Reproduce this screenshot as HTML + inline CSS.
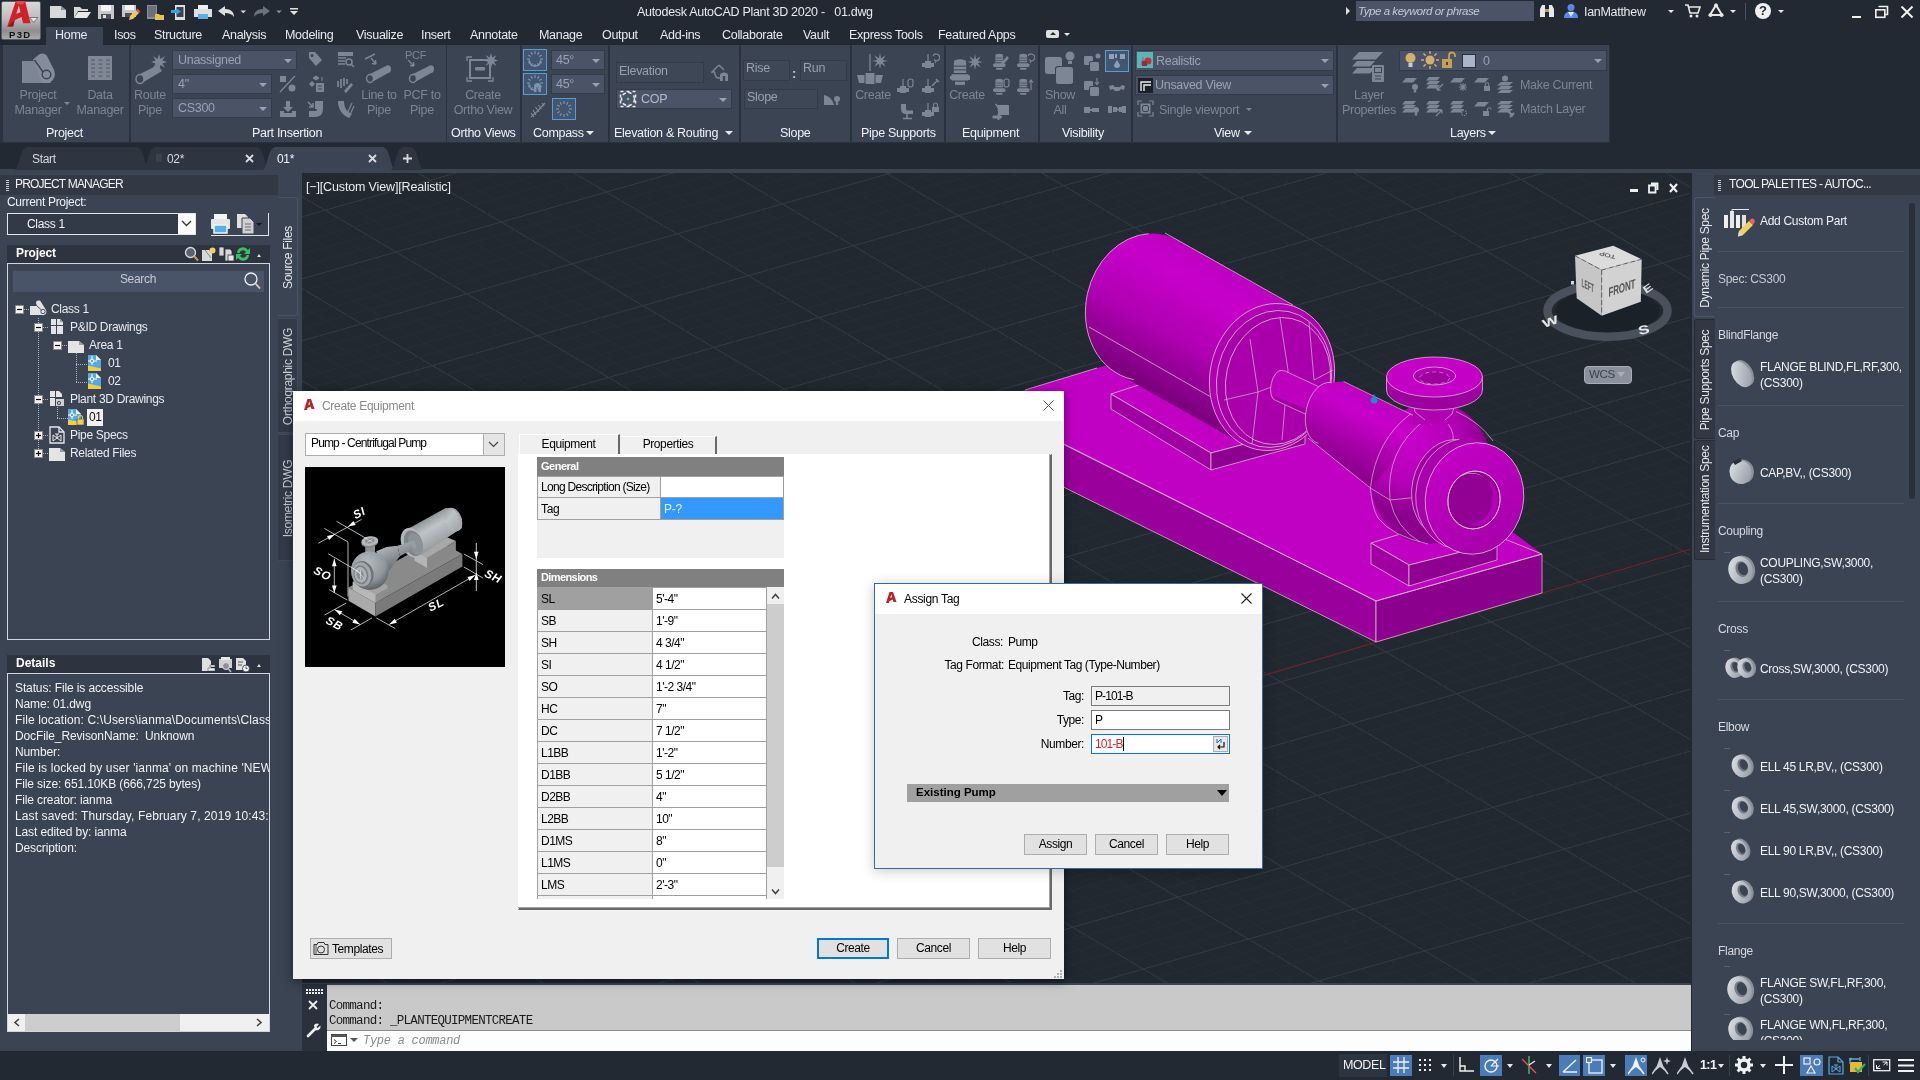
<!DOCTYPE html>
<html lang="en">
<head>
<meta charset="utf-8">
<title>Autodesk AutoCAD Plant 3D 2020 - 01.dwg</title>
<style>
*{box-sizing:border-box;margin:0;padding:0}
html,body{width:1920px;height:1080px;overflow:hidden;background:#222933;will-change:transform;font-family:"Liberation Sans",sans-serif;font-size:12px;color:#e4e7ec;letter-spacing:-0.3px}
.abs{position:absolute}
div,span,svg{position:absolute}
.t{white-space:nowrap;line-height:1}
/* ===== title bar ===== */
#titlebar{left:0;top:0;width:1920px;height:46px;background:#222933}
#menubar .t{font-size:12.5px;color:#e6e9ee;top:29px}
/* ===== ribbon ===== */
#ribbon{left:0;top:45px;width:1920px;height:98px;background:#222933}
.panel{top:0;height:97px;background:#3b4453}
.ptitle{font-size:12.5px;color:#f0f2f5;top:82px}
.dim{color:#7c8594}
.combo{background:#4a5466;border:1px solid #333b48;height:20px}
.combo .t{font-size:12.5px;color:#9aa2b0;top:3px;left:5px}
.arr{width:0;height:0;border-left:4px solid transparent;border-right:4px solid transparent;border-top:4px solid #9aa2b0}
.arrw{width:0;height:0;border-left:4px solid transparent;border-right:4px solid transparent;border-top:4px solid #e6e9ee}
/* ===== file tabs ===== */
#filetabs{left:0;top:143px;width:1920px;height:29px;background:#222933}
/* ===== palettes ===== */
#pm{left:0;top:172px;width:278px;height:879px;background:#3b4453}
#tp{left:1692px;top:172px;width:228px;height:879px;background:#3b4453;overflow:hidden}
#viewport{left:302px;top:173px;width:1388px;height:810px;background:#212830;overflow:hidden}
#cmd{left:300px;top:984px;width:1391px;height:67px;background:#2d3440}
#status{left:0;top:1051px;width:1920px;height:29px;background:#222933}
/* ===== dialogs ===== */
.dlg{background:#f0f0f0;color:#000}
.dlg .t{color:#000;font-size:12px}
.btn{border:1px solid #adadad;background:#e1e1e1;height:22px}

</style>
</head>
<body>
<div id="titlebar">
<div style="left:1px;top:1px;width:40px;height:39px;background:linear-gradient(#d8d8d8,#bcbcbc 45%,#8e8e8e 78%,#aaaaaa);border:1px solid #5a5f66;border-radius:2px"></div>
<svg style="left:2px;top:-2px" width="38" height="38" viewBox="0 0 36 36">
<path d="M5 27 L13 3 L22 3 L27 24 L20 24 L18.5 18 L12 21 L10.5 27 Z M13.5 15 L17.5 13.5 L16 7 Z" fill="#d0202a" fill-rule="evenodd"/>
<path d="M13 3 L22 3 L20 6 L15 6 Z" fill="#e8484e"/>
<path d="M5 27 L12 21 L10.5 27 Z" fill="#9c1018"/>
<path d="M26 18.5 L34 18.5 L30 23 Z" fill="#e8e8e8" stroke="#444" stroke-width="0.6"/>
</svg>
<span class="t" style="left:9px;top:30px;font-size:9.5px;font-weight:bold;color:#111;letter-spacing:1.3px">P3D</span>
<!-- QAT icons -->
<svg style="left:48px;top:2px" width="260" height="20" viewBox="0 0 260 20">
<path d="M2 4 H13 L18 8 V16 H2 Z" fill="#d8d8d8"/><path d="M13 4 L18 8 H13 Z" fill="#8a8a8a"/>
<path d="M26 5 H32 L34 7 H40 V9 H30 L26 16 Z" fill="#d8d8d8"/><path d="M30 10 H43 L39 16 H26 Z" fill="#e8e8e8"/>
<path d="M50 3 H66 V17 H50 Z" fill="#c8c8c8"/><path d="M53 3 H63 V9 H53 Z" fill="#f4f4f4"/><path d="M53 12 H63 V17 H53 Z" fill="#4a4f58"/><path d="M55 13 H58 V16 H55 Z" fill="#e0e0e0"/>
<path d="M74 3 H88 V15 H74 Z" fill="#c8c8c8"/><path d="M77 3 H86 V8 H77 Z" fill="#f4f4f4"/><path d="M77 11 H84 V15 H77 Z" fill="#4a4f58"/><path d="M82 14 L88 8 L91 11 L85 17 L81 18 Z" fill="#e8c66a"/><path d="M88 8 L89.5 6.5 L92.5 9.5 L91 11 Z" fill="#d85050"/>
<path d="M99 3 H109 V17 H99 Z" fill="#8a8f98"/><path d="M100 4 H108 V15 H100 Z" fill="#6a6f78"/><path d="M107 12 H111 L112 13 H116 V18 H107 Z" fill="#e8c050"/>
<path d="M127 3 H137 V18 H127 Z" fill="#e0e0e0"/><path d="M128.500 5 H135.500 V15 H128.500 Z" fill="#3a4250"/><path d="M123 8 H128 V6 L133 9.500 L128 13 V11 H123 Z" fill="#38a0e0"/>
<path d="M150 3 H160 V8 H150 Z" fill="#f0f0f0"/><path d="M146 7 H164 V15 H146 Z" fill="#e0e0e0"/><path d="M150 12 H160 V17 H150 Z" fill="#58b0e8"/>
<path d="M170 9 L177 4 V7 C183 7 186 10 186 15 C184 12 181 11 177 11 V14 Z" fill="#e0e0e0"/>
<path d="M191 8 H199 L195 12 Z" fill="#d8d8d8" transform="scale(0.7) translate(84 4)"/>
<path d="M222 9 L215 4 V7 C209 7 206 10 206 15 C208 12 211 11 215 11 V14 Z" fill="#6a727e"/>
<path d="M227 8 H235 L231 12 Z" fill="#8a919c" transform="scale(0.7) translate(99 4)"/>
<path d="M242 6 H250 V7.500 H242 Z M242 9 H250 L246 13 Z" fill="#e0e0e0"/>
</svg>
<span class="t" style="left:637px;top:5.5px;font-size:12.5px;color:#e6e9ee">Autodesk AutoCAD Plant 3D 2020 -&nbsp;&nbsp; 01.dwg</span>
<div style="left:1346px;top:7px;width:0;height:0;border-top:4px solid transparent;border-bottom:4px solid transparent;border-left:4px solid #e0e0e0"></div>
<div style="left:1356px;top:1px;width:178px;height:20px;background:#4a5466"></div>
<span class="t" style="left:1358px;top:6px;font-size:11.5px;font-style:italic;color:#c4cad4;letter-spacing:-0.45px">Type a keyword or phrase</span>
<svg style="left:1538px;top:3px" width="18" height="16" viewBox="0 0 18 16"><path d="M2 6 L4 2 H7 V6 H11 V2 H14 L16 6 V14 H11 V9 H7 V14 H2 Z" fill="#e8e8e8"/><path d="M7 6 H11 V9 H7 Z" fill="#b8a070"/></svg>
<svg style="left:1563px;top:2px" width="16" height="18" viewBox="0 0 16 18"><circle cx="8" cy="5.500" r="3.500" fill="#5a88e8"/><path d="M1 16 C1 11 4 9.500 8 9.500 C12 9.500 15 11 15 16 Z" fill="#5a88e8"/><path d="M5 10 L8 15 L11 10 Z" fill="#dfe6f8"/></svg>
<span class="t" style="left:1584px;top:6px;font-size:12.5px;color:#e6e9ee">IanMatthew</span>
<div class="arrw" style="left:1668px;top:10px;border-width:3px 3px 0 3px"></div>
<svg style="left:1684px;top:3px" width="18" height="16" viewBox="0 0 18 16"><path d="M1 2 H4 L6 10 H14 L16 4 H5" fill="none" stroke="#e8e8e8" stroke-width="1.600"/><circle cx="7" cy="13" r="1.500" fill="#e8e8e8"/><circle cx="13" cy="13" r="1.500" fill="#e8e8e8"/></svg>
<svg style="left:1707px;top:2px" width="18" height="18" viewBox="0 0 18 18"><path d="M9 3 L15 13 H3 Z" fill="none" stroke="#e8e8e8" stroke-width="2"/><circle cx="9" cy="3.500" r="2" fill="#e8e8e8"/><circle cx="3.500" cy="13" r="2" fill="#e8e8e8"/><circle cx="14.500" cy="13" r="2" fill="#e8e8e8"/></svg>
<div class="arrw" style="left:1730px;top:10px;border-width:3px 3px 0 3px"></div>
<div style="left:1745px;top:3px;width:1px;height:17px;background:#4a5261"></div>
<div style="left:1755px;top:3px;width:16px;height:16px;border-radius:8px;background:#f0f0f0"></div>
<span class="t" style="left:1759px;top:4px;font-size:13px;font-weight:bold;color:#222933">?</span>
<div class="arrw" style="left:1778px;top:10px;border-width:3px 3px 0 3px"></div>
<div style="left:1852px;top:16px;width:9px;height:2px;background:#f0f0f0"></div>
<svg style="left:1874px;top:5px" width="16" height="14" viewBox="0 0 16 14"><path d="M4.500 1.500 H13.500 V9.500 H11" fill="none" stroke="#f0f0f0" stroke-width="1.600"/><rect x="1.800" y="4.800" width="9" height="7.500" fill="none" stroke="#f0f0f0" stroke-width="1.600"/></svg>
<svg style="left:1900px;top:5px" width="14" height="14" viewBox="0 0 14 14"><path d="M1.500 1.500 L12.500 12.500 M12.500 1.500 L1.500 12.500" stroke="#f0f0f0" stroke-width="2"/></svg>
</div>
<div id="menubar">
<div style="left:46px;top:27px;width:57px;height:19px;background:#3b4453"></div>
<span class="t" style="left:55px">Home</span>
<span class="t" style="left:114px">Isos</span>
<span class="t" style="left:154px">Structure</span>
<span class="t" style="left:222px">Analysis</span>
<span class="t" style="left:285px">Modeling</span>
<span class="t" style="left:356px">Visualize</span>
<span class="t" style="left:421px">Insert</span>
<span class="t" style="left:470px">Annotate</span>
<span class="t" style="left:539px">Manage</span>
<span class="t" style="left:602px">Output</span>
<span class="t" style="left:660px">Add-ins</span>
<span class="t" style="left:722px">Collaborate</span>
<span class="t" style="left:803px">Vault</span>
<span class="t" style="left:849px">Express Tools</span>
<span class="t" style="left:938px">Featured Apps</span>
<div style="left:1046px;top:30px;width:13px;height:8px;border-radius:2px;background:#e0e0e0"></div><div style="left:1050px;top:32px;width:0;height:0;border-left:3px solid transparent;border-right:3px solid transparent;border-bottom:3px solid #222933"></div><div class="arrw" style="left:1064px;top:33px;border-width:3px 3px 0 3px"></div>
</div>
<!--RIB--><div id="ribbon">
<div style="left:0;top:0;width:1610px;height:98px;background:#2b323e"></div>
<div class="panel" style="left:3px;width:126px"></div><span class="t ptitle" style="left:46px">Project</span>
<div class="panel" style="left:131px;width:315px"></div><span class="t ptitle" style="left:252px">Part Insertion</span>
<div class="panel" style="left:447px;width:73px"></div><span class="t ptitle" style="left:451px">Ortho Views</span>
<div class="panel" style="left:522px;width:86px"></div><span class="t ptitle" style="left:533px">Compass</span>
<div class="arrw" style="left:586px;top:86px"></div>
<div class="panel" style="left:610px;width:129px"></div><span class="t ptitle" style="left:614px">Elevation &amp; Routing</span>
<div class="arrw" style="left:725px;top:86px"></div>
<div class="panel" style="left:741px;width:109px"></div><span class="t ptitle" style="left:780px">Slope</span>
<div class="panel" style="left:852px;width:92px"></div><span class="t ptitle" style="left:861px">Pipe Supports</span>
<div class="panel" style="left:946px;width:92px"></div><span class="t ptitle" style="left:962px">Equipment</span>
<div class="panel" style="left:1040px;width:91px"></div><span class="t ptitle" style="left:1062px">Visibility</span>
<div class="panel" style="left:1133px;width:203px"></div><span class="t ptitle" style="left:1214px">View</span>
<div class="arrw" style="left:1244px;top:86px"></div>
<div class="panel" style="left:1338px;width:271px"></div><span class="t ptitle" style="left:1450px">Layers</span>
<div class="arrw" style="left:1488px;top:86px"></div>
<svg style="left:21px;top:8px" width="35" height="31" viewBox="0 0 35 31"><path d="M1 8 H14 L30 30 H1 Z" fill="#7d8695"/><path d="M12 6.500 L18 1.500 C21 -0.500 24.500 0.500 26 3 L33 17 C35.500 23 32 30 25 30 L21 29 Z" fill="#858d9b"/><circle cx="25.500" cy="21.500" r="4.300" fill="none" stroke="#3b4453" stroke-width="1.400"/><path d="M13.500 7 L22 19" stroke="#3b4453" stroke-width="1.400"/></svg>
<span class="t dim" style="left:-12px;width:100px;text-align:center;top:44px;font-size:12.5px">Project</span>
<span class="t dim" style="left:-12px;width:100px;text-align:center;top:59px;font-size:12.5px">Manager</span>
<div class="arr" style="left:64px;top:57px;border-width:3px 3px 0 3px;border-top-color:#7d8695"></div>
<svg style="left:88px;top:11px" width="24" height="25" viewBox="0 0 24 25"><rect width="24" height="24" fill="#808896"/><rect x="3.0" y="3.5" width="4" height="1.200" fill="#596170"/><rect x="10.5" y="3.5" width="4" height="1.200" fill="#596170"/><rect x="18.0" y="3.5" width="4" height="1.200" fill="#596170"/><rect x="3.0" y="7.5" width="4" height="1.200" fill="#596170"/><rect x="10.5" y="7.5" width="4" height="1.200" fill="#596170"/><rect x="18.0" y="7.5" width="4" height="1.200" fill="#596170"/><rect x="3.0" y="11.5" width="4" height="1.200" fill="#596170"/><rect x="10.5" y="11.5" width="4" height="1.200" fill="#596170"/><rect x="18.0" y="11.5" width="4" height="1.200" fill="#596170"/><rect x="3.0" y="15.5" width="4" height="1.200" fill="#596170"/><rect x="10.5" y="15.5" width="4" height="1.200" fill="#596170"/><rect x="18.0" y="15.5" width="4" height="1.200" fill="#596170"/><rect x="3.0" y="19.5" width="4" height="1.200" fill="#596170"/><rect x="10.5" y="19.5" width="4" height="1.200" fill="#596170"/><rect x="18.0" y="19.5" width="4" height="1.200" fill="#596170"/></svg>
<span class="t dim" style="left:50px;width:100px;text-align:center;top:44px;font-size:12.5px">Data</span>
<span class="t dim" style="left:50px;width:100px;text-align:center;top:59px;font-size:12.5px">Manager</span>
<svg style="left:134px;top:8px" width="36" height="32" viewBox="0 0 36 32"><path d="M4 22 L24 12 L28 18 L8 30 Z" fill="#7d8695"/><ellipse cx="6" cy="26" rx="4" ry="4.500" fill="#3b4453" stroke="#7d8695" stroke-width="1.500"/><path d="M25 1 L26.500 6 L31 3 L28.500 7.500 L33 9 L28.500 10.500 L31 15 L26.500 12 L25 17 L23.500 12 L19 15 L21.500 10.500 L17 9 L21.500 7.500 L19 3 L23.500 6 Z" fill="#7d8695"/></svg>
<span class="t dim" style="left:100px;width:100px;text-align:center;top:44px;font-size:12.5px">Route</span>
<span class="t dim" style="left:100px;width:100px;text-align:center;top:59px;font-size:12.5px">Pipe</span>
<div class="combo" style="left:172px;top:5px;width:125px;height:20px"><span class="t" style="left:5px;top:3px;font-size:12.5px">Unassigned</span><div class="arr" style="left:111px;top:8px"></div></div>
<div class="combo" style="left:172px;top:29px;width:100px;height:20px"><span class="t" style="left:5px;top:3px;font-size:12.5px">4&quot;</span><div class="arr" style="left:86px;top:8px"></div></div>
<div class="combo" style="left:172px;top:53px;width:100px;height:20px"><span class="t" style="left:5px;top:3px;font-size:12.5px">CS300</span><div class="arr" style="left:86px;top:8px"></div></div>
<svg style="left:306px;top:5px" width="18" height="18" viewBox="0 0 18 18"><path d="M3 2 L9 2 L16 10 L10 16 L3 8 Z" fill="#7d8695"/><circle cx="6" cy="5.500" r="1.500" fill="#3b4453"/></svg>
<svg style="left:336px;top:5px" width="20" height="20" viewBox="0 0 20 20"><rect x="2" y="2" width="15" height="4" fill="#7d8695"/><path d="M2 8 H10 M2 11 H9 M2 14 H9" stroke="#7d8695" stroke-width="1.500"/><circle cx="13" cy="12" r="3" fill="none" stroke="#7d8695" stroke-width="1.500"/><path d="M15 14 L18 17" stroke="#7d8695" stroke-width="1.500"/></svg>
<svg style="left:279px;top:30px" width="18" height="18" viewBox="0 0 18 18"><rect x="1" y="1" width="6" height="6" fill="#7d8695"/><circle cx="13" cy="13" r="3.500" fill="#7d8695"/><path d="M1 17 L16 1" stroke="#7d8695" stroke-width="1.300"/></svg>
<svg style="left:307px;top:30px" width="18" height="18" viewBox="0 0 18 18"><path d="M5 6 L8 9 L5 12 L2 9 Z" fill="#7d8695"/><rect x="9" y="8" width="8" height="9" fill="#7d8695"/><path d="M6 3 L9 1 V5 Z M12 3 L9 1 V5 Z M15 2 V6" fill="#7d8695" stroke="#7d8695"/><path d="M11 11 H15 M11 14 H15" stroke="#3b4453"/></svg>
<svg style="left:336px;top:30px" width="18" height="19" viewBox="0 0 18 19"><path d="M2 6 V12 M5 4 V13 M8 3 V11 M11 4 V9" stroke="#7d8695" stroke-width="1.700"/><path d="M8 16 L15 8 L17 10 L10 18 Z" fill="#7d8695"/></svg>
<svg style="left:279px;top:55px" width="18" height="18" viewBox="0 0 18 18"><path d="M7 1 H11 V7 H14 L9 12 L4 7 H7 Z" fill="#7d8695"/><path d="M1 11 H5 V13 H13 V11 H17 V17 H1 Z" fill="#7d8695"/></svg>
<svg style="left:307px;top:55px" width="18" height="18" viewBox="0 0 18 18"><path d="M8 1 H16 V9 C16 14 13 17 8 17 H2 V11 H8 C9.500 11 10 10.500 10 9 H8 Z" fill="#7d8695"/><path d="M1 2 L6 7 M6 3 V7 H2" stroke="#7d8695" stroke-width="1.500" fill="none"/></svg>
<svg style="left:336px;top:55px" width="19" height="19" viewBox="0 0 19 19"><path d="M2 1 H8 C8 8 11 12 16 14 L13 18 C6 15 2 9 2 1 Z" fill="#7d8695"/><path d="M10 16 L16 3 M13 17 L18 6" stroke="#7d8695" stroke-width="1.200"/></svg>
<svg style="left:362px;top:8px" width="32" height="32" viewBox="0 0 32 32"><path d="M3 6 L13 1" stroke="#7d8695" stroke-width="1.500"/><path d="M9 5 L14 11 M14 11 L13.500 7 M14 11 L10 10.500" stroke="#7d8695" stroke-width="1.300" fill="none"/><path d="M6 22 L24 13 L28 19 L10 29 Z" fill="#7d8695"/><ellipse cx="8" cy="25.500" rx="3.500" ry="4" fill="#3b4453" stroke="#7d8695" stroke-width="1.500"/><ellipse cx="26" cy="16" rx="3" ry="3.700" fill="#7d8695"/></svg>
<span class="t dim" style="left:329px;width:100px;text-align:center;top:44px;font-size:12.5px">Line to</span>
<span class="t dim" style="left:329px;width:100px;text-align:center;top:59px;font-size:12.5px">Pipe</span>
<span class="t dim" style="left:405px;top:5px;font-size:11px;">PCF</span>
<svg style="left:405px;top:14px" width="32" height="26" viewBox="0 0 32 26"><path d="M3 1 L9 7 M9 7 L8.500 3 M9 7 L5 6.500" stroke="#7d8695" stroke-width="1.300" fill="none"/><path d="M6 16 L24 7 L28 13 L10 23 Z" fill="#7d8695"/><ellipse cx="8" cy="19.500" rx="3.500" ry="4" fill="#3b4453" stroke="#7d8695" stroke-width="1.500"/><ellipse cx="26" cy="10" rx="3" ry="3.700" fill="#7d8695"/></svg>
<span class="t dim" style="left:372px;width:100px;text-align:center;top:44px;font-size:12.5px">PCF to</span>
<span class="t dim" style="left:372px;width:100px;text-align:center;top:59px;font-size:12.5px">Pipe</span>
<svg style="left:466px;top:8px" width="33" height="30" viewBox="0 0 33 30"><path d="M1 8 V4 H6 M1 24 V28 H6 M22 28 H27 V24" fill="none" stroke="#7d8695" stroke-width="1.300"/><rect x="4" y="7" width="20" height="18" fill="none" stroke="#7d8695" stroke-width="2"/><rect x="9" y="14" width="10" height="3.500" rx="1" fill="#7d8695"/><path d="M25 0 L26.300 4.500 L30.500 2 L28 6 L32 7.500 L28 9 L30.500 13 L26.300 10.500 L25 15 L23.700 10.500 L19.500 13 L22 9 L18 7.500 L22 6 L19.500 2 L23.700 4.500 Z" fill="#7d8695"/></svg>
<span class="t dim" style="left:433px;width:100px;text-align:center;top:44px;font-size:12.5px">Create</span>
<span class="t dim" style="left:433px;width:100px;text-align:center;top:59px;font-size:12.5px">Ortho View</span>
<div style="left:523px;top:4px;width:24px;height:22px;background:#43566f;border:1px solid #5b9bd5"></div>
<div style="left:523px;top:28px;width:24px;height:22px;background:#43566f;border:1px solid #5b9bd5"></div>
<div style="left:552px;top:53px;width:24px;height:22px;background:#43566f;border:1px solid #5b9bd5"></div>
<svg style="left:526px;top:6px" width="18" height="18" viewBox="0 0 18 18"><path d="M14.0 8.0 L17.0 8.0" stroke="#7a93b5" stroke-width="1.200"/><path d="M13.3 10.5 L15.9 12.0" stroke="#7a93b5" stroke-width="1.200"/><path d="M11.5 12.3 L13.0 14.9" stroke="#7a93b5" stroke-width="1.200"/><path d="M9.0 13.0 L9.0 16.0" stroke="#7a93b5" stroke-width="1.200"/><path d="M6.5 12.3 L5.0 14.9" stroke="#7a93b5" stroke-width="1.200"/><path d="M4.7 10.5 L2.1 12.0" stroke="#7a93b5" stroke-width="1.200"/><path d="M4.0 8.0 L1.0 8.0" stroke="#7a93b5" stroke-width="1.200"/><path d="M4.7 5.5 L2.1 4.0" stroke="#7a93b5" stroke-width="1.200"/><path d="M6.5 3.7 L5.0 1.1" stroke="#7a93b5" stroke-width="1.200"/><path d="M9.0 3.0 L9.0 0.0" stroke="#7a93b5" stroke-width="1.200"/><path d="M11.5 3.7 L13.0 1.1" stroke="#7a93b5" stroke-width="1.200"/><path d="M13.3 5.5 L15.9 4.0" stroke="#7a93b5" stroke-width="1.200"/><path d="M3 9 A6 6 0 0 0 15 9" fill="none" stroke="#7a93b5" stroke-width="1.300"/></svg>
<svg style="left:526px;top:30px" width="18" height="18" viewBox="0 0 18 18"><path d="M14.0 8.0 L17.0 8.0" stroke="#7a93b5" stroke-width="1.200"/><path d="M13.3 10.5 L15.9 12.0" stroke="#7a93b5" stroke-width="1.200"/><path d="M11.5 12.3 L13.0 14.9" stroke="#7a93b5" stroke-width="1.200"/><path d="M9.0 13.0 L9.0 16.0" stroke="#7a93b5" stroke-width="1.200"/><path d="M6.5 12.3 L5.0 14.9" stroke="#7a93b5" stroke-width="1.200"/><path d="M4.7 10.5 L2.1 12.0" stroke="#7a93b5" stroke-width="1.200"/><path d="M4.0 8.0 L1.0 8.0" stroke="#7a93b5" stroke-width="1.200"/><path d="M4.7 5.5 L2.1 4.0" stroke="#7a93b5" stroke-width="1.200"/><path d="M6.5 3.7 L5.0 1.1" stroke="#7a93b5" stroke-width="1.200"/><path d="M9.0 3.0 L9.0 0.0" stroke="#7a93b5" stroke-width="1.200"/><path d="M11.5 3.7 L13.0 1.1" stroke="#7a93b5" stroke-width="1.200"/><path d="M13.3 5.5 L15.9 4.0" stroke="#7a93b5" stroke-width="1.200"/><path d="M3 9 A6 6 0 0 0 8 15" fill="none" stroke="#7a93b5" stroke-width="1.300"/><path d="M8 17 V11 C8 7 15 7 15 11 V17 H12.500 V12 H10.500 V17 Z" fill="#7a93b5"/></svg>
<svg style="left:555px;top:55px" width="18" height="18" viewBox="0 0 18 18"><path d="M14.0 9.0 L17.0 9.0" stroke="#7a93b5" stroke-width="1.200"/><path d="M13.3 11.5 L15.9 13.0" stroke="#7a93b5" stroke-width="1.200"/><path d="M11.5 13.3 L13.0 15.9" stroke="#7a93b5" stroke-width="1.200"/><path d="M9.0 14.0 L9.0 17.0" stroke="#7a93b5" stroke-width="1.200"/><path d="M6.5 13.3 L5.0 15.9" stroke="#7a93b5" stroke-width="1.200"/><path d="M4.7 11.5 L2.1 13.0" stroke="#7a93b5" stroke-width="1.200"/><path d="M4.0 9.0 L1.0 9.0" stroke="#7a93b5" stroke-width="1.200"/><path d="M4.7 6.5 L2.1 5.0" stroke="#7a93b5" stroke-width="1.200"/><path d="M6.5 4.7 L5.0 2.1" stroke="#7a93b5" stroke-width="1.200"/><path d="M9.0 4.0 L9.0 1.0" stroke="#7a93b5" stroke-width="1.200"/><path d="M11.5 4.7 L13.0 2.1" stroke="#7a93b5" stroke-width="1.200"/><path d="M13.3 6.5 L15.9 5.0" stroke="#7a93b5" stroke-width="1.200"/></svg>
<svg style="left:529px;top:56px" width="18" height="18" viewBox="0 0 18 18"><path d="M2 16 C7 12 11 8 16 2 M4 9 L7 14 M6.500 6 L10 11 M9.500 4 L12.500 8 M13 2 L15 5 M2 12 L5 16" stroke="#7d8695" stroke-width="1.200" fill="none"/></svg>
<div class="combo" style="left:551px;top:5px;width:54px;height:20px"><span class="t" style="left:4px;top:3px;font-size:12.5px">45°</span><div class="arr" style="left:40px;top:8px"></div></div>
<div class="combo" style="left:551px;top:29px;width:54px;height:20px"><span class="t" style="left:4px;top:3px;font-size:12.5px">45°</span><div class="arr" style="left:40px;top:8px"></div></div>
<div style="left:616px;top:17px;width:88px;height:21px;background:#3e4756;border:1px solid #333b48"></div>
<span class="t " style="left:619px;top:20px;font-size:12.5px;color:#98a0ae">Elevation</span>
<svg style="left:711px;top:19px" width="18" height="18" viewBox="0 0 18 18"><path d="M8 1 L1 8 H4 M8 1 L13 6" fill="none" stroke="#7d8695" stroke-width="1.500"/><path d="M4 8 A4.500 4.500 0 0 0 9 14" fill="none" stroke="#7d8695" stroke-width="1.500"/><path d="M9 17 V11 C9 7.500 17 7.500 17 11 V17 H14.200 V12 H11.800 V17 Z" fill="#7d8695"/></svg>
<div class="combo" style="left:616px;top:44px;width:116px;height:20px"><span class="t" style="left:24px;top:3px;font-size:12.5px;color:#b4bbc8">COP</span><div class="arr" style="left:102px;top:8px"></div></div>
<svg style="left:619px;top:45px" width="18" height="18" viewBox="0 0 18 18"><rect x="1.500" y="1.500" width="15" height="15" fill="none" stroke="#e8eaee" stroke-width="1.600" stroke-dasharray="3 3"/><circle cx="9" cy="9" r="6.500" fill="none" stroke="#e8eaee" stroke-width="1.600" stroke-dasharray="3.500 2.500"/><circle cx="9" cy="9" r="1.300" fill="#58c8c0"/></svg>
<div style="left:743px;top:15px;width:47px;height:21px;background:#3e4756;border:1px solid #333b48"></div>
<span class="t " style="left:746px;top:17px;font-size:12.5px;color:#98a0ae">Rise</span>
<span class="t " style="left:792px;top:22px;font-size:13px;color:#c8ccd4;font-weight:bold">:</span>
<div style="left:800px;top:15px;width:47px;height:21px;background:#3e4756;border:1px solid #333b48"></div>
<span class="t " style="left:803px;top:17px;font-size:12.5px;color:#98a0ae">Run</span>
<div style="left:744px;top:44px;width:74px;height:20px;background:#3e4756;border:1px solid #333b48"></div>
<span class="t " style="left:747px;top:46px;font-size:12.5px;color:#98a0ae">Slope</span>
<svg style="left:823px;top:47px" width="18" height="15" viewBox="0 0 18 15"><path d="M1 13 V3 C6 4 10 8 11 13 Z" fill="#7d8695"/><circle cx="14" cy="7" r="3" fill="#7d8695"/><rect x="12.800" y="10" width="2.400" height="3" fill="#7d8695"/></svg>
<svg style="left:856px;top:8px" width="34" height="32" viewBox="0 0 34 32"><path d="M14 1 V18" stroke="#7d8695" stroke-width="1.300"/><path d="M24.0 0.0 L25.1 5.2 L29.7 2.3 L26.8 6.9 L32.0 8.0 L26.8 9.1 L29.7 13.7 L25.1 10.8 L24.0 16.0 L22.9 10.8 L18.3 13.7 L21.2 9.1 L16.0 8.0 L21.2 6.9 L18.3 2.3 L22.9 5.2 Z" fill="#7d8695"/><path d="M1 22 H9 V20 H19 V22 H27 L25 30 H19 V31 H9 V30 L3 30 Z" fill="#7d8695"/><path d="M9 20 V31 M19 20 V31" stroke="#3b4453" stroke-width="1"/></svg>
<span class="t dim" style="left:823px;width:100px;text-align:center;top:44px;font-size:12.5px">Create</span>
<svg style="left:922px;top:8px" width="18" height="17" viewBox="0 0 18 17"><path d="M6 1 V8" stroke="#7d8695" stroke-width="1.200"/><path d="M0 10 H3 V8 H9 V10 H12 V14 H9 V15 H3 V14 H0 Z" fill="#7d8695"/><path d="M11 3 A3.500 3.500 0 1 1 14 8 M14 8 l-2 -1.500 M14 8 l-1 2" fill="none" stroke="#7d8695" stroke-width="1.100"/></svg>
<svg style="left:897px;top:33px" width="18" height="17" viewBox="0 0 18 17"><path d="M6 1 V8" stroke="#7d8695" stroke-width="1.200"/><path d="M0 10 H3 V8 H9 V10 H12 V14 H9 V15 H3 V14 H0 Z" fill="#7d8695"/><rect x="11" y="1" width="5" height="8" rx="2.500" fill="none" stroke="#7d8695" stroke-width="1.200"/></svg>
<svg style="left:922px;top:33px" width="18" height="17" viewBox="0 0 18 17"><path d="M6 1 V8" stroke="#7d8695" stroke-width="1.200"/><path d="M0 10 H3 V8 H9 V10 H12 V14 H9 V15 H3 V14 H0 Z" fill="#7d8695"/><path d="M10 8 L16 2 M14 1 L17 4" stroke="#7d8695" stroke-width="1.500"/></svg>
<svg style="left:898px;top:58px" width="18" height="18" viewBox="0 0 18 18"><path d="M3 1 H8 V6 C8 7 9 7.500 10 7.500 H15 V11 H8 C5 11 3 9 3 6 Z" fill="#7d8695"/><path d="M9 11 V15 M5 15.500 H14" stroke="#7d8695" stroke-width="1.600"/></svg>
<svg style="left:922px;top:57px" width="18" height="17" viewBox="0 0 18 17"><path d="M6 1 V8" stroke="#7d8695" stroke-width="1.200"/><path d="M0 10 H3 V8 H9 V10 H12 V14 H9 V15 H3 V14 H0 Z" fill="#7d8695"/><rect x="10" y="5" width="7" height="5" fill="#7d8695"/><path d="M11.500 5 V3 A2 2 0 0 1 15.500 3 V5" fill="none" stroke="#7d8695" stroke-width="1.200"/></svg>
<svg style="left:950px;top:9px" width="34" height="34" viewBox="0 0 34 34"><g transform="translate(0,4) scale(1.25)"><g transform="scale(1.0)"><ellipse cx="8" cy="3" rx="5" ry="2" fill="#7d8695"/><rect x="3" y="4" width="10" height="8" fill="#7d8695"/><path d="M3 6.500 H13 M3 9.500 H13" stroke="#3b4453" stroke-width="0.800"/><rect x="1" y="13" width="14" height="5" rx="1" fill="#7d8695"/><rect x="0" y="14.500" width="2" height="2.500" fill="#7d8695"/><rect x="14" y="14" width="2" height="3.500" fill="#7d8695"/><rect x="4" y="19" width="8" height="2.500" fill="#7d8695"/></g></g><path d="M25.0 0.0 L26.1 5.2 L30.7 2.3 L27.8 6.9 L33.0 8.0 L27.8 9.1 L30.7 13.7 L26.1 10.8 L25.0 16.0 L23.9 10.8 L19.3 13.7 L22.2 9.1 L17.0 8.0 L22.2 6.9 L19.3 2.3 L23.9 5.2 Z" fill="#7d8695"/></svg>
<span class="t dim" style="left:917px;width:100px;text-align:center;top:44px;font-size:12.5px">Create</span>
<svg style="left:993px;top:8px" width="18" height="18" viewBox="0 0 18 18"><g transform="scale(0.78)"><ellipse cx="8" cy="3" rx="5" ry="2" fill="#7d8695"/><rect x="3" y="4" width="10" height="8" fill="#7d8695"/><path d="M3 6.500 H13 M3 9.500 H13" stroke="#3b4453" stroke-width="0.800"/><rect x="1" y="13" width="14" height="5" rx="1" fill="#7d8695"/><rect x="0" y="14.500" width="2" height="2.500" fill="#7d8695"/><rect x="14" y="14" width="2" height="3.500" fill="#7d8695"/><rect x="4" y="19" width="8" height="2.500" fill="#7d8695"/></g><path d="M8 10 L14 3 L16 5 L10 12 Z" fill="#7d8695"/></svg>
<svg style="left:1017px;top:8px" width="18" height="18" viewBox="0 0 18 18"><g transform="scale(0.78)"><ellipse cx="8" cy="3" rx="5" ry="2" fill="#7d8695"/><rect x="3" y="4" width="10" height="8" fill="#7d8695"/><path d="M3 6.500 H13 M3 9.500 H13" stroke="#3b4453" stroke-width="0.800"/><rect x="1" y="13" width="14" height="5" rx="1" fill="#7d8695"/><rect x="0" y="14.500" width="2" height="2.500" fill="#7d8695"/><rect x="14" y="14" width="2" height="3.500" fill="#7d8695"/><rect x="4" y="19" width="8" height="2.500" fill="#7d8695"/></g><path d="M11 3 A3.500 3.500 0 1 1 14 8 M14 8 l-2 -1.500 M14 8 l-1 2" fill="none" stroke="#7d8695" stroke-width="1.100"/></svg>
<svg style="left:993px;top:33px" width="18" height="18" viewBox="0 0 18 18"><g transform="scale(0.78)"><ellipse cx="8" cy="3" rx="5" ry="2" fill="#7d8695"/><rect x="3" y="4" width="10" height="8" fill="#7d8695"/><path d="M3 6.500 H13 M3 9.500 H13" stroke="#3b4453" stroke-width="0.800"/><rect x="1" y="13" width="14" height="5" rx="1" fill="#7d8695"/><rect x="0" y="14.500" width="2" height="2.500" fill="#7d8695"/><rect x="14" y="14" width="2" height="3.500" fill="#7d8695"/><rect x="4" y="19" width="8" height="2.500" fill="#7d8695"/></g><rect x="11" y="1" width="5" height="8" rx="2.500" fill="none" stroke="#7d8695" stroke-width="1.200"/></svg>
<svg style="left:1017px;top:33px" width="18" height="18" viewBox="0 0 18 18"><g transform="scale(0.78)"><ellipse cx="8" cy="3" rx="5" ry="2" fill="#7d8695"/><rect x="3" y="4" width="10" height="8" fill="#7d8695"/><path d="M3 6.500 H13 M3 9.500 H13" stroke="#3b4453" stroke-width="0.800"/><rect x="1" y="13" width="14" height="5" rx="1" fill="#7d8695"/><rect x="0" y="14.500" width="2" height="2.500" fill="#7d8695"/><rect x="14" y="14" width="2" height="3.500" fill="#7d8695"/><rect x="4" y="19" width="8" height="2.500" fill="#7d8695"/></g><path d="M14 12 V2 M12 4.500 L14 2 L16 4.500" fill="none" stroke="#7d8695" stroke-width="1.200"/></svg>
<svg style="left:992px;top:57px" width="18" height="19" viewBox="0 0 18 19"><rect x="6" y="3" width="11" height="10" fill="#7d8695"/><path d="M3 2 L7 4 L6 9 L9 12 M1 14 H6 V12 L10 15 L6 18 V16 H1 Z" fill="#7d8695" stroke="#7d8695" stroke-width="1"/></svg>
<svg style="left:1044px;top:6px" width="32" height="36" viewBox="0 0 32 36"><rect x="1" y="6" width="17" height="17" rx="2.5" fill="#7d8695"/><rect x="11" y="15" width="19" height="19" rx="3" fill="#3b4453"/><rect x="12" y="16" width="17" height="17" rx="2.5" fill="#7d8695"/><circle cx="26" cy="5" r="4.500" fill="#7d8695"/><rect x="24" y="10" width="4" height="3" fill="#7d8695"/></svg>
<span class="t dim" style="left:1010px;width:100px;text-align:center;top:44px;font-size:12.5px">Show</span>
<span class="t dim" style="left:1010px;width:100px;text-align:center;top:59px;font-size:12.5px">All</span>
<svg style="left:1083px;top:8px" width="19" height="19" viewBox="0 0 19 19"><rect x="1" y="3" width="9" height="9" rx="1.3" fill="#7d8695"/><rect x="6" y="8" width="11" height="11" rx="2" fill="#3b4453"/><rect x="7" y="9" width="9" height="9" rx="1.3" fill="#7d8695"/><circle cx="15" cy="3" r="2.500" fill="#7d8695"/></svg>
<svg style="left:1083px;top:33px" width="19" height="19" viewBox="0 0 19 19"><rect x="1" y="3" width="9" height="9" rx="1.3" fill="#7d8695"/><rect x="6" y="8" width="11" height="11" rx="2" fill="#3b4453"/><rect x="7" y="9" width="9" height="9" rx="1.3" fill="#7d8695"/><path d="M14 0 V6 M12 4 L14 6.500 L16 4" fill="none" stroke="#7d8695" stroke-width="1.200"/></svg>
<div style="left:1105px;top:5px;width:24px;height:22px;background:#43566f;border:1px solid #5b9bd5"></div>
<svg style="left:1108px;top:8px" width="18" height="17" viewBox="0 0 18 17"><rect x="1" y="1" width="5" height="5" fill="#8aa0be"/><rect x="7" y="1" width="2" height="4" fill="#8aa0be"/><rect x="12" y="1" width="5" height="5" fill="#8aa0be"/><path d="M9 7 L12 12 A3 3 0 1 1 6 12 Z" fill="#8aa0be"/></svg>
<svg style="left:1109px;top:39px" width="17" height="8" viewBox="0 0 17 8"><path d="M0 2 L4 1 L6 3 H11 L13 1 L16 2 L15 6 L12 5 L10 7 H6 L4 5 L1 6 Z" fill="#7d8695"/></svg>
<svg style="left:1084px;top:61px" width="16" height="8" viewBox="0 0 16 8"><rect x="0" y="1" width="6" height="6" fill="#7d8695"/><rect x="6" y="3" width="2" height="2" fill="#7d8695"/><rect x="8" y="2" width="7" height="4" fill="#7d8695"/></svg>
<svg style="left:1108px;top:60px" width="18" height="9" viewBox="0 0 18 9"><rect x="0" y="1" width="4" height="7" fill="#7d8695"/><rect x="5" y="2" width="4" height="5" fill="#7d8695"/><rect x="9" y="3.500" width="2" height="2" fill="#7d8695"/><rect x="11" y="2" width="3" height="5" fill="#7d8695"/><rect x="14" y="1" width="4" height="7" fill="#7d8695"/></svg>
<div class="combo" style="left:1135px;top:5px;width:199px;height:21px"><span class="t" style="left:20px;top:4px;font-size:12.5px;color:#9aa2b0">Realistic</span><div class="arr" style="left:185px;top:8px"></div></div>
<svg style="left:1137px;top:7px" width="16" height="16" viewBox="0 0 16 16"><rect width="16" height="16" fill="#58b8b8"/><path d="M3 13 L6 4 L9 13 Z" fill="#7a7fa0"/><circle cx="11" cy="9" r="3.500" fill="#c83038"/><rect x="5" y="9" width="5" height="5" fill="#8a3040"/></svg>
<div class="combo" style="left:1135px;top:30px;width:199px;height:20px"><span class="t" style="left:19px;top:3px;font-size:12.5px;color:#9aa2b0">Unsaved View</span><div class="arr" style="left:185px;top:8px"></div></div>
<svg style="left:1138px;top:33px" width="15" height="15" viewBox="0 0 15 15"><rect width="15" height="15" fill="#1c2028"/><path d="M3 13 V4 H13 M6 13 V7 H13" fill="none" stroke="#f0f0f0" stroke-width="1.400"/></svg>
<svg style="left:1137px;top:55px" width="17" height="17" viewBox="0 0 17 17"><path d="M1 5 V1 H5 M12 1 H16 V5 M16 12 V16 H12 M5 16 H1 V12" fill="none" stroke="#7d8695" stroke-width="1.200"/><rect x="3.500" y="3.500" width="10" height="10" fill="#7d8695"/><rect x="5.500" y="5.500" width="6" height="6" rx="1.500" fill="none" stroke="#3b4453" stroke-width="1"/></svg>
<span class="t dim" style="left:1159px;top:59px;font-size:12.5px;">Single viewport</span>
<div class="arr" style="left:1246px;top:63px;border-width:3px 3px 0 3px;border-top-color:#7d8695"></div>
<svg style="left:1351px;top:6px" width="34" height="32" viewBox="0 0 34 32"><path d="M8 1 H32 L25 8.6 H1 Z" fill="#7d8695"/><path d="M6 10 H24 L19 15.6 H1 Z" fill="#7d8695"/><path d="M6 17 H24 L19 22.6 H1 Z" fill="#7d8695"/><rect x="21" y="14" width="12" height="17" rx="1" fill="#7d8695"/><rect x="23" y="16" width="8" height="6" fill="#3b4453"/><rect x="24" y="17" width="6" height="4" fill="#7d8695"/><path d="M24 25 H30 M24 28 H30" stroke="#3b4453" stroke-width="1"/></svg>
<span class="t dim" style="left:1319px;width:100px;text-align:center;top:44px;font-size:12.5px">Layer</span>
<span class="t dim" style="left:1319px;width:100px;text-align:center;top:59px;font-size:12.5px">Properties</span>
<div class="combo" style="left:1399px;top:5px;width:208px;height:21px"><span class="t" style="left:83px;top:4px;font-size:12.5px;color:#9aa2b0">0</span><div class="arr" style="left:194px;top:8px"></div></div>
<svg style="left:1404px;top:7px" width="13" height="16" viewBox="0 0 13 16"><circle cx="6.500" cy="6" r="5" fill="#d4b070"/><rect x="4.500" y="11" width="4" height="4" fill="#c8ccd4"/></svg>
<svg style="left:1421px;top:6px" width="18" height="18" viewBox="0 0 18 18"><circle cx="9" cy="9" r="4.500" fill="#d4b070"/><path d="M9 0 V3 M9 15 V18 M0 9 H3 M15 9 H18 M2.500 2.500 L4.700 4.700 M13.300 13.300 L15.500 15.500 M2.500 15.500 L4.700 13.300 M13.300 4.700 L15.500 2.500" stroke="#d4b070" stroke-width="1.400"/></svg>
<svg style="left:1441px;top:6px" width="16" height="18" viewBox="0 0 16 18"><rect x="1" y="8" width="10" height="9" fill="#c8a050"/><path d="M8 8 V4.500 A3 3 0 0 1 14 4.500 V6" fill="none" stroke="#c8a050" stroke-width="1.800"/><rect x="5" y="11" width="2" height="3" fill="#3b4453"/></svg>
<div style="left:1462px;top:9px;width:14px;height:14px;background:#aab6c8;border:1px solid #2a303a"></div>
<svg style="left:1402px;top:31px" width="20" height="18" viewBox="0 0 20 18"><path d="M4 2 H15 L11 6.6 H0 Z" fill="#7d8695"/><circle cx="13" cy="11" r="3" fill="#7d8695"/><rect x="11.800" y="14" width="2.400" height="2.500" fill="#7d8695"/></svg>
<svg style="left:1426px;top:31px" width="20" height="18" viewBox="0 0 20 18"><path d="M3 1 H14 L11 4.6 H0 Z" fill="#7d8695"/><path d="M3 5 H14 L11 8.6 H0 Z" fill="#7d8695"/><path d="M3 9 H14 L11 12.6 H0 Z" fill="#7d8695"/><path d="M17 8 L11 14 M11 14 V10.500 M11 14 H14.500" stroke="#7d8695" stroke-width="1.300" fill="none"/></svg>
<svg style="left:1450px;top:31px" width="20" height="18" viewBox="0 0 20 18"><path d="M4 2 H15 L11 6.6 H0 Z" fill="#7d8695"/><path d="M13 7 V15 M9 11 H17 M10 8 L16 14 M16 8 L10 14" stroke="#7d8695" stroke-width="1.100"/></svg>
<svg style="left:1474px;top:31px" width="20" height="18" viewBox="0 0 20 18"><path d="M4 2 H15 L11 6.6 H0 Z" fill="#7d8695"/><rect x="10" y="10" width="6" height="5" fill="#7d8695"/><path d="M11.300 10 V8.500 A1.700 1.700 0 0 1 14.700 8.500 V10" fill="none" stroke="#7d8695" stroke-width="1.100"/></svg>
<svg style="left:1497px;top:30px" width="20" height="18" viewBox="0 0 20 18"><circle cx="8" cy="3.500" r="3" fill="#7d8695"/><path d="M4 7 H16 L12 10.6 H0 Z" fill="#7d8695"/><path d="M4 11 H16 L12 14.6 H0 Z" fill="#7d8695"/><path d="M4 15 H16 L12 18.6 H0 Z" fill="#7d8695"/></svg>
<span class="t dim" style="left:1520px;top:34px;font-size:12.5px;">Make Current</span>
<svg style="left:1402px;top:55px" width="20" height="18" viewBox="0 0 20 18"><path d="M3 1 H14 L11 4.6 H0 Z" fill="#7d8695"/><path d="M3 5 H14 L11 8.6 H0 Z" fill="#7d8695"/><path d="M3 9 H14 L11 12.6 H0 Z" fill="#7d8695"/><circle cx="14" cy="10" r="3" fill="#7d8695"/><rect x="12.800" y="13" width="2.400" height="2.500" fill="#7d8695"/></svg>
<svg style="left:1426px;top:55px" width="20" height="18" viewBox="0 0 20 18"><path d="M3 1 H14 L11 4.6 H0 Z" fill="#7d8695"/><path d="M3 5 H14 L11 8.6 H0 Z" fill="#7d8695"/><path d="M3 9 H14 L11 12.6 H0 Z" fill="#7d8695"/><path d="M10 16 L16 10 M16 10 V13.500 M16 10 H12.500" stroke="#7d8695" stroke-width="1.300" fill="none"/></svg>
<svg style="left:1450px;top:55px" width="20" height="18" viewBox="0 0 20 18"><path d="M3 1 H14 L11 4.6 H0 Z" fill="#7d8695"/><path d="M3 5 H14 L11 8.6 H0 Z" fill="#7d8695"/><path d="M3 9 H14 L11 12.6 H0 Z" fill="#7d8695"/><circle cx="14" cy="13" r="2.500" fill="none" stroke="#7d8695" stroke-width="1.200" stroke-dasharray="1.500 1"/></svg>
<svg style="left:1474px;top:55px" width="20" height="18" viewBox="0 0 20 18"><path d="M4 2 H15 L11 6.6 H0 Z" fill="#7d8695"/><rect x="9" y="11" width="6" height="5" fill="#7d8695"/><path d="M13.500 11 V9.500 A1.700 1.700 0 0 1 17 9.500" fill="none" stroke="#7d8695" stroke-width="1.100"/></svg>
<svg style="left:1497px;top:55px" width="20" height="18" viewBox="0 0 20 18"><path d="M4 1 H16 L12 4.6 H0 Z" fill="#7d8695"/><path d="M4 5 H16 L12 8.6 H0 Z" fill="#7d8695"/><path d="M4 9 H16 L12 12.6 H0 Z" fill="#7d8695"/><path d="M8 8 L16 16 M13 17 L17 13" stroke="#7d8695" stroke-width="2.200"/></svg>
<span class="t dim" style="left:1520px;top:58px;font-size:12.5px;">Match Layer</span>
</div><!--/RIB-->
<!--LEFT--><div id="filetabs">
<div style="left:0;top:26px;width:1920px;height:4px;background:#3b4453"></div>
<svg style="left:14px;top:4px" width="136" height="23" viewBox="0 0 136 23"><path d="M0 23 C6 23 5 0 14 0 H122 C131 0 130 23 136 23 Z" fill="#2e3541"/></svg>
<svg style="left:142px;top:4px" width="128" height="23" viewBox="0 0 128 23"><path d="M0 23 C6 23 5 0 14 0 H114 C123 0 122 23 128 23 Z" fill="#2e3541"/></svg>
<svg style="left:262px;top:4px" width="134" height="23" viewBox="0 0 134 23"><path d="M0 23 C6 23 5 0 14 0 H120 C129 0 128 23 134 23 Z" fill="#3b4453"/></svg>
<svg style="left:390px;top:4px" width="34" height="23" viewBox="0 0 34 23"><path d="M0 23 C6 23 5 0 14 0 H20 C29 0 28 23 34 23 Z" fill="#2e3541"/></svg>
<span class="t" style="left:32px;top:10px;font-size:12px;color:#d4d8de;">Start</span>
<div style="left:156px;top:11px;width:6px;height:8px;background:#3c4350;border-radius:1px"></div>
<span class="t" style="left:167px;top:10px;font-size:12px;color:#d4d8de;">02*</span>
<span class="t" style="left:277px;top:10px;font-size:12px;color:#f0f2f5;">01*</span>
<svg style="left:245px;top:11px" width="9" height="9" viewBox="0 0 9 9"><path d="M1 1 L8 8 M8 1 L1 8" stroke="#d8dce2" stroke-width="1.800"/></svg>
<svg style="left:368px;top:11px" width="9" height="9" viewBox="0 0 9 9"><path d="M1 1 L8 8 M8 1 L1 8" stroke="#d8dce2" stroke-width="1.800"/></svg>
<svg style="left:403px;top:11px" width="9" height="9" viewBox="0 0 9 9"><path d="M4.500 0 V9 M0 4.500 H9" stroke="#d8dce2" stroke-width="1.800"/></svg>
</div>
<div id="pm">
<div style="left:0;top:3px;width:278px;height:20px;background:#323945"></div>
<div style="left:6px;top:8px;width:3px;height:11px;background:repeating-linear-gradient(#c8ccd4 0 1px,transparent 1px 2px)"></div>
<span class="t" style="left:15px;top:6px;font-size:12px;color:#f0f2f5;letter-spacing:-0.8px">PROJECT MANAGER</span>
<span class="t" style="left:7px;top:24px;font-size:12px;color:#f0f2f5;">Current Project:</span>
<div style="left:7px;top:41px;width:189px;height:22px;background:#323a48;border:1px solid #e4e6ea"></div>
<div style="left:178px;top:42px;width:17px;height:20px;background:#fcfcfc"></div>
<svg style="left:181px;top:48px" width="11" height="7" viewBox="0 0 11 7"><path d="M1 1 L5.500 5.500 L10 1" fill="none" stroke="#333" stroke-width="1.300"/></svg>
<span class="t" style="left:27px;top:46px;font-size:12px;color:#f0f2f5;">Class 1</span>
<svg style="left:210px;top:41px" width="21" height="21" viewBox="0 0 21 21"><rect x="4" y="1" width="13" height="6" fill="#f4f4f4"/><rect x="1" y="6" width="19" height="10" rx="1" fill="#e4e4e4"/><rect x="4" y="12" width="13" height="8" fill="#58b0e8" stroke="#f4f4f4" stroke-width="1.500"/></svg>
<svg style="left:236px;top:41px" width="19" height="22" viewBox="0 0 19 22"><path d="M1 1 H9 L12 4 V15 H1 Z" fill="#e0e0e0"/><path d="M6 5 H14 L18 9 V21 H6 Z" fill="#d0d0d0" stroke="#3b4453" stroke-width="1"/><path d="M9 11 H15 M9 14 H15 M9 17 H15" stroke="#6a6a6a" stroke-width="1.200"/></svg>
<div class="arrw" style="left:256px;top:51px;border-width:3px 3px 0 3px;border-top-color:#15181e"></div>
<div style="left:211px;top:63px;width:58px;height:1px;background:#dfe2e7"></div><div style="left:268px;top:41px;width:1px;height:22px;background:#dfe2e7"></div>
<div style="left:7px;top:73px;width:263px;height:18px;background:#2d3440"></div>
<span class="t" style="left:16px;top:75px;font-size:12px;color:#fff;font-weight:bold;letter-spacing:-0.1px">Project</span>
<svg style="left:184px;top:74px" width="15" height="16" viewBox="0 0 15 16"><circle cx="6.500" cy="6.500" r="5" fill="#5a626e" stroke="#d8dce2" stroke-width="1.300"/><path d="M10 10 L14 14.500" stroke="#c89858" stroke-width="2"/></svg>
<svg style="left:201px;top:74px" width="15" height="16" viewBox="0 0 15 16"><path d="M1 4 H8 L11 7 V15 H1 Z" fill="#d8d8d8"/><path d="M4 4 L10 12" stroke="#888" stroke-width="1"/><circle cx="11.500" cy="4.500" r="3" fill="#f0d060"/></svg>
<svg style="left:218px;top:74px" width="17" height="16" viewBox="0 0 17 16"><path d="M1 1 H6 V10 H1 Z M7 3 H12 L14 5 V15 H7 Z" fill="#d8d8d8" stroke="#2d3440" stroke-width="0.800"/><rect x="10" y="9" width="6" height="6" fill="#e8e8e8" stroke="#2d3440" stroke-width="0.800"/></svg>
<svg style="left:235px;top:74px" width="16" height="16" viewBox="0 0 16 16"><path d="M2 7 A6 6 0 0 1 13 4 L15 2 V8 H9 L11 6 A3.500 3.500 0 0 0 4.500 7 Z M14 9 A6 6 0 0 1 3 12 L1 14 V8 H7 L5 10 A3.500 3.500 0 0 0 11.500 9 Z" fill="#38c060"/></svg>
<div style="left:257px;top:82px;width:0;height:0;border-left:2.500px solid transparent;border-right:2.500px solid transparent;border-bottom:3px solid #e0e0e0"></div>
<div style="left:7px;top:91px;width:263px;height:377px;border:1px solid #cfd6e2"></div>
<div style="left:13px;top:99px;width:251px;height:21px;background:#4a5468"></div>
<span class="t" style="left:88px;top:101px;font-size:12px;color:#c4cad6;width:100px;text-align:center">Search</span>
<svg style="left:244px;top:100px" width="18" height="18" viewBox="0 0 18 18"><circle cx="7" cy="7" r="6" fill="none" stroke="#f0f0f0" stroke-width="1.300"/><path d="M11.500 11.500 L16 16.500" stroke="#e8d0b0" stroke-width="1.800"/></svg>
<svg style="left:15px;top:133px" width="9" height="9" viewBox="0 0 9 9"><rect x="0.500" y="0.500" width="8" height="8" fill="#f4f4f4" stroke="#8a8a8a"/><path d="M2 4.500 H7" stroke="#111" stroke-width="1.200"/></svg>
<div style="left:24px;top:137px;width:5px;height:1px;background:repeating-linear-gradient(90deg,#aab2c0 0 1px,transparent 1px 2px)"></div>
<svg style="left:30px;top:128px" width="17" height="17" viewBox="0 0 17 17"><path d="M0 6 H7 L6 3 C6 0 10 0 11 2 L16 10 C17.500 13 15 16 12 15 L0 15 Z" fill="#e2e2e2"/><circle cx="13" cy="11.500" r="2.200" fill="#e2e2e2" stroke="#3b4453" stroke-width="0.900"/><path d="M7 6 L11.500 10" stroke="#3b4453" stroke-width="0.900"/></svg>
<span class="t" style="left:51px;top:131px;font-size:12px;color:#e8ebf0;">Class 1</span>
<div style="left:38px;top:146px;width:1px;height:136px;background:repeating-linear-gradient(#aab2c0 0 1px,transparent 1px 2px)"></div>
<svg style="left:34px;top:151px" width="9" height="9" viewBox="0 0 9 9"><rect x="0.500" y="0.500" width="8" height="8" fill="#f4f4f4" stroke="#8a8a8a"/><path d="M2 4.500 H7" stroke="#111" stroke-width="1.200"/></svg>
<div style="left:43px;top:155px;width:6px;height:1px;background:repeating-linear-gradient(90deg,#aab2c0 0 1px,transparent 1px 2px)"></div>
<svg style="left:50px;top:146px" width="14" height="17" viewBox="0 0 14 17"><path d="M1 1 H6 V7 H1 Z M7 1 H10 L13 4 V7 H7 Z M1 8 H6 V16 H1 Z M7 8 H13 V16 H7 Z" fill="#e4e4e4"/><path d="M10 1 L13 4 H10 Z" fill="#9a9a9a"/></svg>
<span class="t" style="left:70px;top:149px;font-size:12px;color:#e8ebf0;">P&amp;ID Drawings</span>
<svg style="left:53px;top:169px" width="9" height="9" viewBox="0 0 9 9"><rect x="0.500" y="0.500" width="8" height="8" fill="#f4f4f4" stroke="#8a8a8a"/><path d="M2 4.500 H7" stroke="#111" stroke-width="1.200"/></svg>
<div style="left:62px;top:173px;width:6px;height:1px;background:repeating-linear-gradient(90deg,#aab2c0 0 1px,transparent 1px 2px)"></div>
<svg style="left:68px;top:166px" width="17" height="16" viewBox="0 0 17 16"><path d="M0 15 V3 H11 L16 7 V15 Z" fill="#e4e4e4"/><path d="M11 3 L16 7 H11 Z" fill="#9c9c9c"/></svg>
<span class="t" style="left:89px;top:167px;font-size:12px;color:#e8ebf0;">Area 1</span>
<div style="left:76px;top:181px;width:1px;height:30px;background:repeating-linear-gradient(#aab2c0 0 1px,transparent 1px 2px)"></div>
<div style="left:76px;top:192px;width:11px;height:1px;background:repeating-linear-gradient(90deg,#aab2c0 0 1px,transparent 1px 2px)"></div>
<div style="left:76px;top:210px;width:11px;height:1px;background:repeating-linear-gradient(90deg,#aab2c0 0 1px,transparent 1px 2px)"></div>
<svg style="left:88px;top:183px" width="14" height="17" viewBox="0 0 14 17"><path d="M0 0 H8 L13 5 V16 H0 Z" fill="#58a8e8"/><path d="M8 0 L13 5 H8 Z" fill="#f0f0f0"/><path d="M0 10.500 L13 13.500 V16 H0 Z" fill="#f0d040"/><path d="M4 1 V10 M0 6 H9" stroke="#fff" stroke-width="1"/><circle cx="4" cy="6" r="1.800" fill="#58a8e8" stroke="#fff" stroke-width="1"/></svg>
<span class="t" style="left:108px;top:185px;font-size:12px;color:#e8ebf0;">01</span>
<svg style="left:88px;top:201px" width="14" height="17" viewBox="0 0 14 17"><path d="M0 0 H8 L13 5 V16 H0 Z" fill="#58a8e8"/><path d="M8 0 L13 5 H8 Z" fill="#f0f0f0"/><path d="M0 10.500 L13 13.500 V16 H0 Z" fill="#f0d040"/><path d="M4 1 V10 M0 6 H9" stroke="#fff" stroke-width="1"/><circle cx="4" cy="6" r="1.800" fill="#58a8e8" stroke="#fff" stroke-width="1"/></svg>
<span class="t" style="left:108px;top:203px;font-size:12px;color:#e8ebf0;">02</span>
<svg style="left:34px;top:223px" width="9" height="9" viewBox="0 0 9 9"><rect x="0.500" y="0.500" width="8" height="8" fill="#f4f4f4" stroke="#8a8a8a"/><path d="M2 4.500 H7" stroke="#111" stroke-width="1.200"/></svg>
<div style="left:43px;top:227px;width:6px;height:1px;background:repeating-linear-gradient(90deg,#aab2c0 0 1px,transparent 1px 2px)"></div>
<svg style="left:49px;top:218px" width="16" height="17" viewBox="0 0 16 17"><path d="M1 1 H6 V7 H1 Z M7 1 H10 L13 4 V7 H7 Z M1 8 H6 V16 H1 Z" fill="#e4e4e4"/><path d="M7 9 H15 V16 H7 Z" fill="#d0d0d0"/><circle cx="10" cy="13" r="2" fill="#3b4453"/><circle cx="10" cy="13" r="1" fill="#e0e0e0"/></svg>
<span class="t" style="left:70px;top:221px;font-size:12px;color:#e8ebf0;">Plant 3D Drawings</span>
<div style="left:57px;top:235px;width:1px;height:11px;background:repeating-linear-gradient(#aab2c0 0 1px,transparent 1px 2px)"></div>
<div style="left:57px;top:246px;width:11px;height:1px;background:repeating-linear-gradient(90deg,#aab2c0 0 1px,transparent 1px 2px)"></div>
<svg style="left:68px;top:237px" width="17" height="17" viewBox="0 0 17 17"><path d="M0 0 H8 L13 5 V16 H0 Z" fill="#58a8e8"/><path d="M8 0 L13 5 H8 Z" fill="#f0f0f0"/><path d="M0 10.500 L13 13.500 V16 H0 Z" fill="#f0d040"/><path d="M4 1 V10 M0 6 H9" stroke="#fff" stroke-width="1"/><circle cx="4" cy="6" r="1.800" fill="#58a8e8" stroke="#fff" stroke-width="1"/><rect x="9" y="10" width="7" height="6" fill="#f0d050" stroke="#3b4453" stroke-width="0.600"/><path d="M10.500 10 V8.500 A2 2 0 0 1 14.500 8.500 V10" fill="none" stroke="#f0d050" stroke-width="1.200"/></svg>
<div style="left:87px;top:237px;width:16px;height:17px;background:#f0f0f0"></div>
<span class="t" style="left:89px;top:239px;font-size:12px;color:#111;">01</span>
<svg style="left:34px;top:259px" width="9" height="9" viewBox="0 0 9 9"><rect x="0.500" y="0.500" width="8" height="8" fill="#f4f4f4" stroke="#8a8a8a"/><path d="M2 4.500 H7" stroke="#111" stroke-width="1.200"/><path d="M4.500 2 V7" stroke="#111" stroke-width="1.200"/></svg>
<div style="left:43px;top:263px;width:5px;height:1px;background:repeating-linear-gradient(90deg,#aab2c0 0 1px,transparent 1px 2px)"></div>
<svg style="left:49px;top:254px" width="16" height="18" viewBox="0 0 16 18"><path d="M1 1 H10 L15 6 V17 H1 Z" fill="none" stroke="#e8e8e8" stroke-width="1.300"/><path d="M10 1 V6 H15" fill="none" stroke="#e8e8e8" stroke-width="1.300"/><path d="M4 9 L8 12 L4 15 Z M12 9 L8 12 L12 15 Z M8 12 V8 M6 8 H10" fill="none" stroke="#e8e8e8" stroke-width="1"/></svg>
<span class="t" style="left:70px;top:257px;font-size:12px;color:#e8ebf0;">Pipe Specs</span>
<svg style="left:34px;top:277px" width="9" height="9" viewBox="0 0 9 9"><rect x="0.500" y="0.500" width="8" height="8" fill="#f4f4f4" stroke="#8a8a8a"/><path d="M2 4.500 H7" stroke="#111" stroke-width="1.200"/><path d="M4.500 2 V7" stroke="#111" stroke-width="1.200"/></svg>
<div style="left:43px;top:281px;width:5px;height:1px;background:repeating-linear-gradient(90deg,#aab2c0 0 1px,transparent 1px 2px)"></div>
<svg style="left:49px;top:273px" width="17" height="17" viewBox="0 0 17 17"><path d="M0 16 V3 H11 L16 7 V16 Z" fill="#e4e4e4"/><path d="M11 3 L16 7 H11 Z" fill="#9c9c9c"/></svg>
<span class="t" style="left:70px;top:275px;font-size:12px;color:#e8ebf0;">Related Files</span>
<div style="left:7px;top:483px;width:263px;height:18px;background:#2d3440"></div>
<span class="t" style="left:16px;top:485px;font-size:12px;color:#fff;font-weight:bold;letter-spacing:0">Details</span>
<svg style="left:201px;top:485px" width="15" height="15" viewBox="0 0 15 15"><path d="M1 1 H7 L10 4 V14 H1 Z" fill="#e0e0e0"/><path d="M9 8 H14 V10 H9 Z M7 11 H14 V14 H7 Z" fill="#f4f4f4" stroke="#2d3440" stroke-width="0.500"/></svg>
<svg style="left:218px;top:485px" width="15" height="16" viewBox="0 0 15 16"><rect x="1" y="2" width="13" height="9" fill="#d0d0d0"/><rect x="3" y="0" width="9" height="3" fill="#e8e8e8"/><circle cx="8" cy="9" r="3.500" fill="#8a8f98" stroke="#e0e0e0"/><path d="M10.500 12 L13 15" stroke="#c0c0c0" stroke-width="1.500"/></svg>
<svg style="left:235px;top:485px" width="15" height="16" viewBox="0 0 15 16"><path d="M1 1 H8 L11 4 V13 H1 Z" fill="#e0e0e0"/><path d="M3 5 H8 M3 8 H7" stroke="#555" stroke-width="1"/><circle cx="11" cy="11.500" r="3.500" fill="#f0f0f0" stroke="#2d3440" stroke-width="0.800"/><path d="M11 9.500 V11.500 H12.500" stroke="#333" stroke-width="0.800" fill="none"/></svg>
<div style="left:257px;top:492px;width:0;height:0;border-left:2.500px solid transparent;border-right:2.500px solid transparent;border-bottom:3px solid #e0e0e0"></div>
<div style="left:7px;top:501px;width:263px;height:359px;border:1px solid #cfd6e2;overflow:hidden">
<span class="t" style="left:7px;top:8px;font-size:12px;color:#f0f2f5;letter-spacing:-0.12px">Status: File is accessible</span>
<span class="t" style="left:7px;top:24px;font-size:12px;color:#f0f2f5;letter-spacing:-0.12px">Name: 01.dwg</span>
<span class="t" style="left:7px;top:40px;font-size:12px;color:#f0f2f5;letter-spacing:0.12px">File location: C:\Users\ianma\Documents\Class 1\Plant 3D Models</span>
<span class="t" style="left:7px;top:56px;font-size:12px;color:#f0f2f5;letter-spacing:-0.12px">DocFile_RevisonName:&nbsp; Unknown</span>
<span class="t" style="left:7px;top:72px;font-size:12px;color:#f0f2f5;letter-spacing:-0.12px">Number:</span>
<span class="t" style="left:7px;top:88px;font-size:12px;color:#f0f2f5;letter-spacing:0.12px">File is locked by user 'ianma' on machine 'NEWPC'</span>
<span class="t" style="left:7px;top:104px;font-size:12px;color:#f0f2f5;letter-spacing:-0.12px">File size: 651.10KB (666,725 bytes)</span>
<span class="t" style="left:7px;top:120px;font-size:12px;color:#f0f2f5;letter-spacing:-0.12px">File creator: ianma</span>
<span class="t" style="left:7px;top:136px;font-size:12px;color:#f0f2f5;letter-spacing:0.12px">Last saved: Thursday, February 7, 2019 10:43:43 PM</span>
<span class="t" style="left:7px;top:152px;font-size:12px;color:#f0f2f5;letter-spacing:-0.12px">Last edited by: ianma</span>
<span class="t" style="left:7px;top:168px;font-size:12px;color:#f0f2f5;letter-spacing:-0.12px">Description:</span>
<div style="left:0;top:340px;width:261px;height:17px;background:#f0f0f0"></div>
<div style="left:17px;top:340px;width:155px;height:17px;background:#cdcdcd"></div>
<svg style="left:6px;top:344px" width="7" height="9" viewBox="0 0 7 9"><path d="M5 1 L1 4.500 L5 8" fill="none" stroke="#444" stroke-width="1.600"/></svg>
<svg style="left:248px;top:344px" width="7" height="9" viewBox="0 0 7 9"><path d="M1 1 L5 4.500 L1 8" fill="none" stroke="#444" stroke-width="1.600"/></svg>
</div>
</div>
<div id="sidetabs">
<div style="left:278px;top:172px;width:24px;height:880px;background:#3b4453"></div>
<div style="left:278px;top:197px;width:20px;height:119px;background:#3b4453;border:1px solid #4a5465;border-left:none;border-radius:0 3px 3px 0"><span class="t" style="left:4px;top:111px;font-size:12px;color:#e4e7ec;transform-origin:0 0;transform:rotate(-90deg);width:103px;text-align:center">Source Files</span></div>
<div style="left:278px;top:318px;width:20px;height:115px;background:#343b48;border:1px solid #424b5a;border-left:none;border-radius:0 3px 3px 0"><span class="t" style="left:4px;top:107px;font-size:12px;color:#c8ced8;transform-origin:0 0;transform:rotate(-90deg);width:99px;text-align:center">Orthographic DWG</span></div>
<div style="left:278px;top:434px;width:20px;height:127px;background:#343b48;border:1px solid #424b5a;border-left:none;border-radius:0 3px 3px 0"><span class="t" style="left:4px;top:119px;font-size:12px;color:#c8ced8;transform-origin:0 0;transform:rotate(-90deg);width:111px;text-align:center">Isometric DWG</span></div>
</div><!--/LEFT-->
<!--VIEW--><div id="viewport"><svg style="left:0;top:0" width="1389" height="811" viewBox="0 0 1389 811"><defs><linearGradient id="gm" gradientUnits="userSpaceOnUse" x1="930" y1="75" x2="850" y2="215"><stop offset="0" stop-color="#b400b6"/><stop offset="0.3" stop-color="#c800ca"/><stop offset="0.65" stop-color="#b000b2"/><stop offset="1" stop-color="#7c007e"/></linearGradient><linearGradient id="gc" gradientUnits="userSpaceOnUse" x1="1075" y1="215" x2="1035" y2="290"><stop offset="0" stop-color="#b800ba"/><stop offset="0.35" stop-color="#c800ca"/><stop offset="1" stop-color="#8c008e"/></linearGradient><radialGradient id="gv" gradientUnits="userSpaceOnUse" cx="1105" cy="270" r="75"><stop offset="0" stop-color="#c800ca"/><stop offset="0.6" stop-color="#b400b6"/><stop offset="1" stop-color="#8a008c"/></radialGradient><linearGradient id="gf" gradientUnits="userSpaceOnUse" x1="1130" y1="280" x2="1220" y2="370"><stop offset="0" stop-color="#c400c6"/><stop offset="1" stop-color="#a400a6"/></linearGradient></defs><path d="M-2 -203.6 L1398 -602.6 M-2 -141.6 L1398 -540.6 M-2 -79.6 L1398 -478.6 M-2 -17.6 L1398 -416.6 M-2 44.4 L1398 -354.6 M-2 106.4 L1398 -292.6 M-2 168.4 L1398 -230.6 M-2 230.4 L1398 -168.6 M-2 292.4 L1398 -106.6 M-2 354.4 L1398 -44.6 M-2 416.4 L1398 17.4 M-2 478.4 L1398 79.4 M-2 540.4 L1398 141.4 M-2 602.4 L1398 203.4 M-2 664.4 L1398 265.4 M-2 726.4 L1398 327.4 M-2 788.4 L1398 389.4 M-2 850.4 L1398 451.4 M-2 912.4 L1398 513.4 M-2 974.4 L1398 575.4 M-2 1036.4 L1398 637.4 M-2 1098.4 L1398 699.4 M-2 1160.4 L1398 761.4 M-2 1222.4 L1398 823.4 M-2 1284.4 L1398 885.4 M-2 1346.4 L1398 947.4 M-2 1408.4 L1398 1009.4 M-2 1470.4 L1398 1071.4 M-2 1532.4 L1398 1133.4 M-2 1594.4 L1398 1195.4 M-2 1656.4 L1398 1257.4 M-2 1718.4 L1398 1319.4 M-2 1780.4 L1398 1381.4 M-2 1842.4 L1398 1443.4 M-1761 -3 L-261 882.0 M-1605 -3 L-105 882.0 M-1449 -3 L51 882.0 M-1293 -3 L207 882.0 M-1137 -3 L363 882.0 M-981 -3 L519 882.0 M-825 -3 L675 882.0 M-669 -3 L831 882.0 M-513 -3 L987 882.0 M-357 -3 L1143 882.0 M-201 -3 L1299 882.0 M-45 -3 L1455 882.0 M111 -3 L1611 882.0 M267 -3 L1767 882.0 M423 -3 L1923 882.0 M579 -3 L2079 882.0 M735 -3 L2235 882.0 M891 -3 L2391 882.0 M1047 -3 L2547 882.0 M1203 -3 L2703 882.0 M1359 -3 L2859 882.0 M1515 -3 L3015 882.0 M1671 -3 L3171 882.0 M1827 -3 L3327 882.0" stroke="#343c47" stroke-width="1" fill="none"/><path d="M-2 -191.2 L1398 -590.2 M-2 -178.8 L1398 -577.8 M-2 -166.4 L1398 -565.4 M-2 -154.0 L1398 -553.0 M-2 -129.2 L1398 -528.2 M-2 -116.8 L1398 -515.8 M-2 -104.4 L1398 -503.4 M-2 -92.0 L1398 -491.0 M-2 -67.2 L1398 -466.2 M-2 -54.8 L1398 -453.8 M-2 -42.4 L1398 -441.4 M-2 -30.0 L1398 -429.0 M-2 -5.2 L1398 -404.2 M-2 7.2 L1398 -391.8 M-2 19.6 L1398 -379.4 M-2 32.0 L1398 -367.0 M-2 56.8 L1398 -342.2 M-2 69.2 L1398 -329.8 M-2 81.6 L1398 -317.4 M-2 94.0 L1398 -305.0 M-2 118.8 L1398 -280.2 M-2 131.2 L1398 -267.8 M-2 143.6 L1398 -255.4 M-2 156.0 L1398 -243.0 M-2 180.8 L1398 -218.2 M-2 193.2 L1398 -205.8 M-2 205.6 L1398 -193.4 M-2 218.0 L1398 -181.0 M-2 242.8 L1398 -156.2 M-2 255.2 L1398 -143.8 M-2 267.6 L1398 -131.4 M-2 280.0 L1398 -119.0 M-2 304.8 L1398 -94.2 M-2 317.2 L1398 -81.8 M-2 329.6 L1398 -69.4 M-2 342.0 L1398 -57.0 M-2 366.8 L1398 -32.2 M-2 379.2 L1398 -19.8 M-2 391.6 L1398 -7.4 M-2 404.0 L1398 5.0 M-2 428.8 L1398 29.8 M-2 441.2 L1398 42.2 M-2 453.6 L1398 54.6 M-2 466.0 L1398 67.0 M-2 490.8 L1398 91.8 M-2 503.2 L1398 104.2 M-2 515.6 L1398 116.6 M-2 528.0 L1398 129.0 M-2 552.8 L1398 153.8 M-2 565.2 L1398 166.2 M-2 577.6 L1398 178.6 M-2 590.0 L1398 191.0 M-2 614.8 L1398 215.8 M-2 627.2 L1398 228.2 M-2 639.6 L1398 240.6 M-2 652.0 L1398 253.0 M-2 676.8 L1398 277.8 M-2 689.2 L1398 290.2 M-2 701.6 L1398 302.6 M-2 714.0 L1398 315.0 M-2 738.8 L1398 339.8 M-2 751.2 L1398 352.2 M-2 763.6 L1398 364.6 M-2 776.0 L1398 377.0 M-2 800.8 L1398 401.8 M-2 813.2 L1398 414.2 M-2 825.6 L1398 426.6 M-2 838.0 L1398 439.0 M-2 862.8 L1398 463.8 M-2 875.2 L1398 476.2 M-2 887.6 L1398 488.6 M-2 900.0 L1398 501.0 M-2 924.8 L1398 525.8 M-2 937.2 L1398 538.2 M-2 949.6 L1398 550.6 M-2 962.0 L1398 563.0 M-2 986.8 L1398 587.8 M-2 999.2 L1398 600.2 M-2 1011.6 L1398 612.6 M-2 1024.0 L1398 625.0 M-2 1048.8 L1398 649.8 M-2 1061.2 L1398 662.2 M-2 1073.6 L1398 674.6 M-2 1086.0 L1398 687.0 M-2 1110.8 L1398 711.8 M-2 1123.2 L1398 724.2 M-2 1135.6 L1398 736.6 M-2 1148.0 L1398 749.0 M-2 1172.8 L1398 773.8 M-2 1185.2 L1398 786.2 M-2 1197.6 L1398 798.6 M-2 1210.0 L1398 811.0 M-2 1234.8 L1398 835.8 M-2 1247.2 L1398 848.2 M-2 1259.6 L1398 860.6 M-2 1272.0 L1398 873.0 M-2 1296.8 L1398 897.8 M-2 1309.2 L1398 910.2 M-2 1321.6 L1398 922.6 M-2 1334.0 L1398 935.0 M-2 1358.8 L1398 959.8 M-2 1371.2 L1398 972.2 M-2 1383.6 L1398 984.6 M-2 1396.0 L1398 997.0 M-2 1420.8 L1398 1021.8 M-2 1433.2 L1398 1034.2 M-2 1445.6 L1398 1046.6 M-2 1458.0 L1398 1059.0 M-2 1482.8 L1398 1083.8 M-2 1495.2 L1398 1096.2 M-2 1507.6 L1398 1108.6 M-2 1520.0 L1398 1121.0 M-2 1544.8 L1398 1145.8 M-2 1557.2 L1398 1158.2 M-2 1569.6 L1398 1170.6 M-2 1582.0 L1398 1183.0 M-2 1606.8 L1398 1207.8 M-2 1619.2 L1398 1220.2 M-2 1631.6 L1398 1232.6 M-2 1644.0 L1398 1245.0 M-2 1668.8 L1398 1269.8 M-2 1681.2 L1398 1282.2 M-2 1693.6 L1398 1294.6 M-2 1706.0 L1398 1307.0 M-2 1730.8 L1398 1331.8 M-2 1743.2 L1398 1344.2 M-2 1755.6 L1398 1356.6 M-2 1768.0 L1398 1369.0 M-2 1792.8 L1398 1393.8 M-2 1805.2 L1398 1406.2 M-2 1817.6 L1398 1418.6 M-2 1830.0 L1398 1431.0 M-2 1854.8 L1398 1455.8 M-2 1867.2 L1398 1468.2 M-2 1879.6 L1398 1480.6 M-2 1892.0 L1398 1493.0 M-1729.8 -3 L-229.8 882.0 M-1698.6 -3 L-198.6 882.0 M-1667.4 -3 L-167.4 882.0 M-1636.2 -3 L-136.2 882.0 M-1573.8 -3 L-73.8 882.0 M-1542.6 -3 L-42.6 882.0 M-1511.4 -3 L-11.4 882.0 M-1480.2 -3 L19.8 882.0 M-1417.8 -3 L82.2 882.0 M-1386.6 -3 L113.4 882.0 M-1355.4 -3 L144.6 882.0 M-1324.2 -3 L175.8 882.0 M-1261.8 -3 L238.2 882.0 M-1230.6 -3 L269.4 882.0 M-1199.4 -3 L300.6 882.0 M-1168.2 -3 L331.8 882.0 M-1105.8 -3 L394.2 882.0 M-1074.6 -3 L425.4 882.0 M-1043.4 -3 L456.6 882.0 M-1012.2 -3 L487.8 882.0 M-949.8 -3 L550.2 882.0 M-918.6 -3 L581.4 882.0 M-887.4 -3 L612.6 882.0 M-856.2 -3 L643.8 882.0 M-793.8 -3 L706.2 882.0 M-762.6 -3 L737.4 882.0 M-731.4 -3 L768.6 882.0 M-700.2 -3 L799.8 882.0 M-637.8 -3 L862.2 882.0 M-606.6 -3 L893.4 882.0 M-575.4 -3 L924.6 882.0 M-544.2 -3 L955.8 882.0 M-481.8 -3 L1018.2 882.0 M-450.6 -3 L1049.4 882.0 M-419.4 -3 L1080.6 882.0 M-388.2 -3 L1111.8 882.0 M-325.8 -3 L1174.2 882.0 M-294.6 -3 L1205.4 882.0 M-263.4 -3 L1236.6 882.0 M-232.2 -3 L1267.8 882.0 M-169.8 -3 L1330.2 882.0 M-138.6 -3 L1361.4 882.0 M-107.4 -3 L1392.6 882.0 M-76.2 -3 L1423.8 882.0 M-13.8 -3 L1486.2 882.0 M17.4 -3 L1517.4 882.0 M48.6 -3 L1548.6 882.0 M79.8 -3 L1579.8 882.0 M142.2 -3 L1642.2 882.0 M173.4 -3 L1673.4 882.0 M204.6 -3 L1704.6 882.0 M235.8 -3 L1735.8 882.0 M298.2 -3 L1798.2 882.0 M329.4 -3 L1829.4 882.0 M360.6 -3 L1860.6 882.0 M391.8 -3 L1891.8 882.0 M454.2 -3 L1954.2 882.0 M485.4 -3 L1985.4 882.0 M516.6 -3 L2016.6 882.0 M547.8 -3 L2047.8 882.0 M610.2 -3 L2110.2 882.0 M641.4 -3 L2141.4 882.0 M672.6 -3 L2172.6 882.0 M703.8 -3 L2203.8 882.0 M766.2 -3 L2266.2 882.0 M797.4 -3 L2297.4 882.0 M828.6 -3 L2328.6 882.0 M859.8 -3 L2359.8 882.0 M922.2 -3 L2422.2 882.0 M953.4 -3 L2453.4 882.0 M984.6 -3 L2484.6 882.0 M1015.8 -3 L2515.8 882.0 M1078.2 -3 L2578.2 882.0 M1109.4 -3 L2609.4 882.0 M1140.6 -3 L2640.6 882.0 M1171.8 -3 L2671.8 882.0 M1234.2 -3 L2734.2 882.0 M1265.4 -3 L2765.4 882.0 M1296.6 -3 L2796.6 882.0 M1327.8 -3 L2827.8 882.0 M1390.2 -3 L2890.2 882.0 M1421.4 -3 L2921.4 882.0 M1452.6 -3 L2952.6 882.0 M1483.8 -3 L2983.8 882.0 M1546.2 -3 L3046.2 882.0 M1577.4 -3 L3077.4 882.0 M1608.6 -3 L3108.6 882.0 M1639.8 -3 L3139.8 882.0 M1702.2 -3 L3202.2 882.0 M1733.4 -3 L3233.4 882.0 M1764.6 -3 L3264.6 882.0 M1795.8 -3 L3295.8 882.0 M1858.2 -3 L3358.2 882.0 M1889.4 -3 L3389.4 882.0 M1920.6 -3 L3420.6 882.0 M1951.8 -3 L3451.8 882.0" stroke="#262d37" stroke-width="1" fill="none"/><path d="M960.0 503.0 L1389.0 376.0" fill="none" stroke="#7c2228" stroke-width="1" /><path d="M703.0 223.0 L795.0 195.0 L938.0 155.0 L1240.0 381.0 L1074.0 428.0 L703.0 242.0 Z" fill="#c000c2" /><path d="M703.0 242.0 L1074.0 428.0 L1074.0 469.0 L703.0 285.0 Z" fill="#9a009c" stroke="#d2b8c8" stroke-width="0.8" /><path d="M1074.0 428.0 L1240.0 381.0 L1240.0 420.0 L1074.0 469.0 Z" fill="#8c008e" stroke="#d2b8c8" stroke-width="0.8" /><path d="M723.0 217.0 L795.0 195.0" fill="none" stroke="#d2b8c8" stroke-width="0.8" /><path d="M762.0 271.0 L1074.0 428.0 L1240.0 381.0 L1195.0 363.0" fill="none" stroke="#d2b8c8" stroke-width="0.8" /><path d="M809.0 221.0 L858.0 205.0 L1003.0 255.0 L909.0 280.0 Z" fill="#c200c4" stroke="#d2b8c8" stroke-width="0.8" /><path d="M809.0 221.0 L909.0 280.0 L909.0 297.0 L809.0 236.0 Z" fill="#a000a2" stroke="#d2b8c8" stroke-width="0.8" /><path d="M909.0 280.0 L1003.0 255.0 L1003.0 271.0 L909.0 297.0 Z" fill="#8e0090" stroke="#d2b8c8" stroke-width="0.8" /><path d="M783.4 139.7 L783.6 133.3 L784.3 126.9 L785.5 120.6 L787.1 114.3 L789.2 108.2 L791.7 102.3 L794.6 96.7 L797.9 91.3 L801.6 86.3 L805.6 81.6 L809.9 77.3 L814.5 73.4 L819.4 70.0 L824.4 67.1 L829.6 64.7 L834.9 62.8 L840.3 61.5 L845.8 60.7 L851.3 60.5 L856.7 60.9 L862.0 61.8 L867.2 63.2 L872.3 65.2 L877.1 67.7 L1001.1 137.7 L1005.8 140.7 L1010.1 144.2 L1014.1 148.1 L1017.8 152.5 L1021.2 157.3 L1024.1 162.4 L1026.7 167.8 L1028.8 173.6 L1030.4 179.5 L1031.6 185.6 L1032.4 191.9 L1032.6 198.3 L1032.4 204.7 L1031.7 211.1 L1030.5 217.4 L1028.9 223.7 L1026.8 229.8 L1024.3 235.7 L1021.4 241.3 L1018.1 246.7 L1014.4 251.7 L1010.4 256.4 L1006.1 260.7 L1001.5 264.6 L996.6 268.0 L991.6 270.9 L986.4 273.3 L981.1 275.1 L975.7 276.5 L970.2 277.3 L964.7 277.5 L959.3 277.1 L954.0 276.2 L948.8 274.8 L943.7 272.8 L938.9 270.3 L814.9 200.3 L810.2 197.3 L805.9 193.8 L801.9 189.9 L798.2 185.5 L794.8 180.7 L791.9 175.6 L789.3 170.2 L787.2 164.4 L785.6 158.5 L784.4 152.4 L783.6 146.1 Z" fill="url(#gm)" /><ellipse cx="846.0" cy="134.0" rx="62" ry="74" transform="rotate(12.5 846.0 134.0)" fill="none" stroke="#d2b8c8" stroke-width="0.8" stroke-dasharray="200 500" stroke-dashoffset="-105"/><path d="M863.0 60.0 L991.0 132.0" fill="none" stroke="#d2b8c8" stroke-width="0.8" /><path d="M787.0 154.0 L909.0 224.0" fill="none" stroke="#d2b8c8" stroke-width="0.8" /><ellipse cx="970.0" cy="204.0" rx="62" ry="74" transform="rotate(12.5 970.0 204.0)" fill="#b000b2" stroke="#d2b8c8" stroke-width="0.8" /><ellipse cx="972.0" cy="206.0" rx="57" ry="69" transform="rotate(12.5 972.0 206.0)" fill="#a600a8" stroke="#d2b8c8" stroke-width="0.8" /><ellipse cx="976.0" cy="208.0" rx="52" ry="64" transform="rotate(12.5 976.0 208.0)" fill="#aa00ac" stroke="#d2b8c8" stroke-width="0.8" /><path d="M948.0 166.0 L956.0 219.0 L950.0 271.0" fill="none" stroke="#d2b8c8" stroke-width="0.7" /><path d="M978.0 145.0 L986.0 197.0 L980.0 267.0" fill="none" stroke="#d2b8c8" stroke-width="0.7" /><path d="M1007.0 149.0 L1012.0 207.0" fill="none" stroke="#d2b8c8" stroke-width="0.7" /><path d="M922.0 227.0 L956.0 219.0 L972.0 213.0" fill="none" stroke="#d2b8c8" stroke-width="0.7" /><path d="M1012.0 207.0 L1031.0 197.0" fill="none" stroke="#d2b8c8" stroke-width="0.7" /><path d="M968.5 216.1 L968.6 214.8 L968.7 213.5 L968.9 212.2 L969.2 210.8 L969.5 209.5 L969.8 208.2 L970.3 207.0 L970.8 205.8 L971.3 204.6 L971.8 203.5 L972.4 202.4 L973.1 201.5 L973.8 200.6 L974.4 199.8 L975.2 199.1 L975.9 198.5 L976.6 198.1 L977.3 197.7 L978.1 197.4 L978.8 197.3 L979.5 197.2 L980.2 197.3 L980.9 197.5 L1028.0 219.0 L1016.0 247.0 L973.1 227.5 L972.5 227.1 L971.9 226.7 L971.3 226.2 L970.8 225.5 L970.3 224.8 L969.9 224.0 L969.5 223.1 L969.2 222.0 L968.9 221.0 L968.7 219.8 L968.6 218.6 L968.5 217.4 Z" fill="#bc00be" /><path d="M972.0 223.0 L1016.0 241.0 L1016.0 247.0 L975.0 227.5 Z" fill="#9c009e" /><path d="M982.0 197.5 L1028.0 219.0" fill="none" stroke="#d2b8c8" stroke-width="0.7" /><path d="M973.5 227.3 L1014.0 246.0" fill="none" stroke="#d2b8c8" stroke-width="0.7" /><ellipse cx="977.0" cy="212.5" rx="8" ry="15.5" transform="rotate(12 977.0 212.5)" fill="none" stroke="#d2b8c8" stroke-width="0.7" stroke-dasharray="39 100" stroke-dashoffset="-19.400"/><path d="M1069.0 370.0 L1128.0 352.0 L1195.0 370.0 L1107.0 392.0 Z" fill="#c000c2" stroke="#d2b8c8" stroke-width="0.8" /><path d="M1069.0 370.0 L1107.0 392.0 L1107.0 413.0 L1069.0 391.0 Z" fill="#a000a2" stroke="#d2b8c8" stroke-width="0.8" /><path d="M1107.0 392.0 L1195.0 370.0 L1195.0 387.0 L1107.0 413.0 Z" fill="#8e0090" stroke="#d2b8c8" stroke-width="0.8" /><ellipse cx="1129.0" cy="300.0" rx="61" ry="71" transform="rotate(8 1129.0 300.0)" fill="url(#gv)" /><path d="M1003.3 246.7 L1003.4 244.0 L1003.6 241.4 L1003.9 238.7 L1004.4 236.1 L1005.0 233.4 L1005.8 230.8 L1006.7 228.3 L1007.7 225.9 L1008.9 223.6 L1010.1 221.4 L1011.5 219.4 L1012.9 217.5 L1014.4 215.8 L1016.0 214.2 L1017.6 212.9 L1019.3 211.8 L1021.0 210.9 L1022.7 210.2 L1024.4 209.7 L1026.1 209.4 L1041.7 208.5 L1108.4 241.0 L1102.0 267.0 L1086.0 295.0 L1068.4 315.0 L1006.0 264.8 L1004.1 254.2 L1003.7 251.7 L1003.4 249.2 Z" fill="url(#gc)" /><ellipse cx="1023.0" cy="240.0" rx="19" ry="31" transform="rotate(12 1023.0 240.0)" fill="none" stroke="#d2b8c8" stroke-width="0.7" stroke-dasharray="80 200" stroke-dashoffset="-40"/><path d="M1041.7 208.5 L1108.4 241.0" fill="none" stroke="#d2b8c8" stroke-width="0.7" /><path d="M1006.0 265.0 L1068.4 315.0" fill="none" stroke="#d2b8c8" stroke-width="0.7" /><path d="M1108.4 241.0 Q1074.0 267.0 1068.4 315.0" fill="none" stroke="#d2b8c8" stroke-width="0.700"/><path d="M1068.4 315.0 Q1070.0 335.0 1076.0 345.0 Q1090.0 363.0 1126.0 371.0" fill="none" stroke="#d2b8c8" stroke-width="0.700"/><path d="M1123.0 247.0 Q1083.0 277.0 1088.0 327.0 Q1094.0 355.0 1118.0 369.0" fill="none" stroke="#d2b8c8" stroke-width="0.700"/><path d="M1068.4 315.0 L1088.0 327.0 L1118.0 324.0" fill="none" stroke="#d2b8c8" stroke-width="0.7" /><path d="M1153.0 238.0 Q1178.0 249.0 1191.0 268.0" fill="none" stroke="#d2b8c8" stroke-width="0.700"/><path d="M1146.0 251.0 Q1154.0 261.0 1150.0 274.0" fill="none" stroke="#d2b8c8" stroke-width="0.700"/><path d="M1108.0 241.0 Q1118.0 245.0 1130.0 251.0" fill="none" stroke="#d2b8c8" stroke-width="0.700"/><path d="M1111.0 225.0 L1154.0 225.0 L1154.0 251.0 L1111.0 251.0 Z" fill="#b000b2" /><path d="M1111.0 227.0 L1113.0 239.0 L1123.0 247.0" fill="none" stroke="#d2b8c8" stroke-width="0.7" /><path d="M1154.0 227.0 L1150.0 241.0 L1143.0 247.0" fill="none" stroke="#d2b8c8" stroke-width="0.7" /><ellipse cx="1132.5" cy="217.0" rx="48" ry="20" transform="rotate(0 1132.5 217.0)" fill="#9c009e" stroke="#d2b8c8" stroke-width="0.8" /><path d="M1084.5 204.0 L1180.5 204.0 L1180.5 217.0 L1084.5 217.0 Z" fill="#a800aa" /><path d="M1084.5 204.0 L1084.5 217.0" fill="none" stroke="#d2b8c8" stroke-width="0.8" /><path d="M1180.5 204.0 L1180.5 217.0" fill="none" stroke="#d2b8c8" stroke-width="0.8" /><ellipse cx="1132.5" cy="204.0" rx="48" ry="20" transform="rotate(0 1132.5 204.0)" fill="#c400c6" stroke="#d2b8c8" stroke-width="0.8" /><ellipse cx="1132.5" cy="203.0" rx="21" ry="9" transform="rotate(0 1132.5 203.0)" fill="#b000b2" stroke="#d2b8c8" stroke-width="0.8" /><ellipse cx="1132.5" cy="205.0" rx="15" ry="6" transform="rotate(0 1132.5 205.0)" fill="#9c009e" stroke="#d2b8c8" stroke-width="0.6" stroke-dasharray="4 3"/><path d="M1072 221 l3.500 6 a3.500 3.500 0 1 1 -7 0 Z" fill="#1890c8"/><ellipse cx="1150.0" cy="316.0" rx="40" ry="50" transform="rotate(12 1150.0 316.0)" fill="#a000a2" stroke="#d2b8c8" stroke-width="0.7" /><path d="M1113.7 325.3 L1113.8 320.5 L1114.2 315.6 L1115.1 310.8 L1116.3 306.1 L1117.8 301.5 L1119.7 297.0 L1121.9 292.7 L1124.5 288.6 L1127.3 284.8 L1130.4 281.2 L1133.8 278.0 L1137.3 275.1 L1141.1 272.5 L1145.0 270.3 L1149.1 268.5 L1153.3 267.1 L1157.5 266.0 L1161.8 265.4 L1166.1 265.3 L1170.4 265.5 L1174.6 266.2 L1178.8 267.3 L1182.8 268.8 L1192.3 273.3 L1196.2 275.2 L1199.8 277.5 L1203.3 280.2 L1206.5 283.2 L1209.5 286.5 L1212.2 290.1 L1214.6 294.0 L1216.7 298.1 L1218.4 302.4 L1219.8 306.9 L1220.9 311.6 L1221.5 316.3 L1221.8 321.2 L1221.7 326.0 L1221.3 330.9 L1220.4 335.7 L1219.2 340.4 L1217.7 345.0 L1215.8 349.5 L1213.6 353.8 L1211.0 357.9 L1208.2 361.7 L1205.1 365.3 L1201.7 368.5 L1198.2 371.4 L1194.4 374.0 L1190.5 376.2 L1186.4 378.0 L1182.2 379.5 L1178.0 380.5 L1173.7 381.0 L1169.4 381.2 L1165.1 381.0 L1160.9 380.3 L1156.7 379.2 L1152.7 377.7 L1143.2 373.2 L1139.3 371.3 L1135.7 369.0 L1132.2 366.3 L1129.0 363.3 L1126.0 360.0 L1123.3 356.4 L1120.9 352.5 L1118.8 348.4 L1117.1 344.1 L1115.7 339.6 L1114.6 334.9 L1114.0 330.2 Z" fill="#a800aa" /><ellipse cx="1163.0" cy="321.0" rx="49" ry="56" transform="rotate(12 1163.0 321.0)" fill="none" stroke="#d2b8c8" stroke-width="0.7" stroke-dasharray="170 400" stroke-dashoffset="-60"/><ellipse cx="1172.5" cy="325.5" rx="49" ry="56" transform="rotate(12 1172.5 325.5)" fill="url(#gf)" stroke="#d2b8c8" stroke-width="0.8" /><ellipse cx="1172.0" cy="327.0" rx="26" ry="29" transform="rotate(12 1172.0 327.0)" fill="#8e0090" stroke="#d2b8c8" stroke-width="0.8" /><ellipse cx="1168.0" cy="325.0" rx="22" ry="25" transform="rotate(12 1168.0 325.0)" fill="none" stroke="#d2b8c8" stroke-width="0.6" stroke-dasharray="60 200" stroke-dashoffset="-95"/><ellipse cx="1176.0" cy="329.0" rx="20" ry="24" transform="rotate(12 1176.0 329.0)" fill="#b400b6" /><ellipse cx="1170.0" cy="326.0" rx="21" ry="25" transform="rotate(12 1170.0 326.0)" fill="#920094" /><ellipse cx="1172.0" cy="327.0" rx="26" ry="29" transform="rotate(12 1172.0 327.0)" fill="none" stroke="#d2b8c8" stroke-width="0.8" /></svg>
<span class="t" style="left:4px;top:8px;font-size:12.5px;color:#e8ebf0;letter-spacing:-0.15px">[−][Custom View][Realistic]</span>
<svg style="left:1326px;top:8px" width="56" height="14" viewBox="0 0 56 14"><rect x="2" y="8" width="8" height="3" fill="#f0f0f0"/><path d="M23 2.500 H29.500 V9 M21 4.500 H27.500 V11.500 H21 Z" fill="none" stroke="#f0f0f0" stroke-width="1.800"/><path d="M42 3 L49 11 M49 3 L42 11" stroke="#f0f0f0" stroke-width="2.200"/></svg>
<svg style="left:1218px;top:47px" width="170" height="140" viewBox="0 0 170 140"><ellipse cx="87.5" cy="90.8" rx="52" ry="22" fill="#1b2129"/><ellipse cx="87.5" cy="90.8" rx="60" ry="26" fill="none" stroke="#4a515c" stroke-width="8.500"/><path d="M55.0 35.8 L93.3 25.8 L121.7 39.2 L81.7 50.0 Z" fill="#dcdcdc"/><path d="M55.0 35.8 L81.7 50.0 L81.7 95.8 L56.7 78.3 Z" fill="#c6c6c6"/><path d="M81.7 50.0 L121.7 39.2 L120.8 81.7 L81.7 95.8 Z" fill="#d2d2d2"/><path d="M55.0 35.8 L81.7 50.0 L121.7 39.2 M81.7 50.0 L81.7 95.8" fill="none" stroke="#444" stroke-width="0.700" stroke-dasharray="5 2.500"/><text x="0" y="0" font-family="Liberation Sans,sans-serif" font-weight="bold" font-size="13" fill="#555" transform="translate(88.500 77) skewY(-19) scale(0.62 1)">FRONT</text><text x="0" y="0" font-family="Liberation Sans,sans-serif" font-weight="bold" font-size="12" fill="#5a5a5a" transform="translate(61.500 66.500) skewY(27) scale(0.42 1)">LEFT</text><text x="0" y="0" font-family="Liberation Sans,sans-serif" font-weight="bold" font-size="9" fill="#666" transform="translate(96 35.500) rotate(194) scale(0.95 0.62)">TOP</text><text x="0" y="0" font-family="Liberation Sans,sans-serif" font-weight="bold" font-size="15" fill="#e8e8e8" transform="translate(24 108) rotate(-20) scale(1.15 0.75)">W</text><text x="0" y="0" font-family="Liberation Sans,sans-serif" font-weight="bold" font-size="15" fill="#e8e8e8" transform="translate(119 115) rotate(-12) scale(1.15 0.8)">S</text><text x="0" y="0" font-family="Liberation Sans,sans-serif" font-weight="bold" font-size="13" fill="#dcdcdc" transform="translate(126 74) rotate(-35) scale(1.1 0.8)">E</text><rect x="51" y="61" width="3" height="3.500" fill="#d8d8d8"/></svg>
<div style="left:1282px;top:193px;width:48px;height:18px;background:#8a909c;border-radius:4px;border:1px solid #a8adb8"></div>
<span class="t" style="left:1287px;top:196px;font-size:11.500px;color:#3a4250">WCS</span>
<div style="left:1315px;top:199px;width:0;height:0;border-left:4px solid transparent;border-right:4px solid transparent;border-top:5px solid #a8aeba"></div></div><!--/VIEW-->

<!--RIGHT--><div id="tp">
<div style="left:22px;top:3px;width:206px;height:20px;background:#323945"></div>
<div style="left:26px;top:8px;width:3px;height:11px;background:repeating-linear-gradient(#c8ccd4 0 1px,transparent 1px 2px)"></div>
<span class="t" style="left:37px;top:6px;font-size:12px;color:#f0f2f5;letter-spacing:-0.65px">TOOL PALETTES - AUTOC...</span>
<div style="left:2px;top:25px;width:21px;height:120px;background:#3b4453;border:1px solid #4c5668;border-right:none;border-radius:3px 0 0 3px"><span class="t" style="left:4px;top:112px;font-size:12px;color:#e4e7ec;transform-origin:0 0;transform:rotate(-90deg);width:104px;text-align:center">Dynamic Pipe Spec</span></div>
<div style="left:2px;top:147px;width:21px;height:120px;background:#313844;border:1px solid #262c36;border-right:none;border-radius:3px 0 0 3px"><span class="t" style="left:4px;top:112px;font-size:12px;color:#e4e7ec;transform-origin:0 0;transform:rotate(-90deg);width:104px;text-align:center">Pipe Supports Spec</span></div>
<div style="left:2px;top:268px;width:21px;height:120px;background:#313844;border:1px solid #262c36;border-right:none;border-radius:3px 0 0 3px"><span class="t" style="left:4px;top:112px;font-size:12px;color:#e4e7ec;transform-origin:0 0;transform:rotate(-90deg);width:104px;text-align:center">Instrumentation Spec</span></div>
<div style="left:217px;top:31px;width:6px;height:296px;background:#2a303b;border-radius:3px"></div>
<div style="left:26px;top:79px;width:186px;height:1px;background:#4b5463"></div>
<div style="left:26px;top:135px;width:186px;height:1px;background:#4b5463"></div>
<div style="left:26px;top:233px;width:186px;height:1px;background:#4b5463"></div>
<div style="left:26px;top:331px;width:186px;height:1px;background:#4b5463"></div>
<div style="left:26px;top:429px;width:186px;height:1px;background:#4b5463"></div>
<div style="left:26px;top:527px;width:186px;height:1px;background:#4b5463"></div>
<div style="left:26px;top:751px;width:186px;height:1px;background:#4b5463"></div>
<svg style="left:31px;top:37px" width="34" height="28" viewBox="0 0 34 28"><rect x="1" y="6" width="4" height="13" fill="#f0f0f0"/><rect x="7" y="2" width="4" height="17" fill="#e8e8e8"/><rect x="13" y="6" width="4" height="13" fill="#f0f0f0"/><rect x="19" y="6" width="4" height="13" fill="#e0e0e0"/><path d="M9 2 V0.500 H26" fill="none" stroke="#e8e8e8" stroke-width="1"/><path d="M16 22 L26 12 L30 16 L20 26 L15 27.500 Z" fill="#f0d060"/><path d="M26 12 L28 10 C30 8.500 33 11.500 31.500 13.500 L30 16 Z" fill="#e86060"/><path d="M16 22 L20 26 L15 27.500 Z" fill="#d8d8d8"/></svg>
<span class="t" style="left:68px;top:43px;font-size:12px;color:#f0f2f5;">Add Custom Part</span>
<span class="t" style="left:26px;top:101px;font-size:12px;color:#c4cad4;">Spec: CS300</span>
<span class="t" style="left:26px;top:157px;font-size:12px;color:#d4d8e0;">BlindFlange</span>
<span class="t" style="left:26px;top:255px;font-size:12px;color:#d4d8e0;">Cap</span>
<span class="t" style="left:26px;top:353px;font-size:12px;color:#d4d8e0;">Coupling</span>
<span class="t" style="left:26px;top:451px;font-size:12px;color:#d4d8e0;">Cross</span>
<span class="t" style="left:26px;top:549px;font-size:12px;color:#d4d8e0;">Elbow</span>
<span class="t" style="left:26px;top:773px;font-size:12px;color:#d4d8e0;">Flange</span>
<span class="t" style="left:68px;top:189px;font-size:12px;color:#f0f2f5;">FLANGE BLIND,FL,RF,300,</span>
<span class="t" style="left:68px;top:205px;font-size:12px;color:#f0f2f5;">(CS300)</span>
<span class="t" style="left:68px;top:295px;font-size:12px;color:#f0f2f5;">CAP,BV,, (CS300)</span>
<span class="t" style="left:68px;top:385px;font-size:12px;color:#f0f2f5;">COUPLING,SW,3000,</span>
<span class="t" style="left:68px;top:401px;font-size:12px;color:#f0f2f5;">(CS300)</span>
<span class="t" style="left:68px;top:491px;font-size:12px;color:#f0f2f5;">Cross,SW,3000, (CS300)</span>
<span class="t" style="left:68px;top:589px;font-size:12px;color:#f0f2f5;">ELL 45 LR,BV,, (CS300)</span>
<span class="t" style="left:68px;top:631px;font-size:12px;color:#f0f2f5;">ELL 45,SW,3000, (CS300)</span>
<span class="t" style="left:68px;top:673px;font-size:12px;color:#f0f2f5;">ELL 90 LR,BV,, (CS300)</span>
<span class="t" style="left:68px;top:715px;font-size:12px;color:#f0f2f5;">ELL 90,SW,3000, (CS300)</span>
<span class="t" style="left:68px;top:805px;font-size:12px;color:#f0f2f5;">FLANGE SW,FL,RF,300,</span>
<span class="t" style="left:68px;top:821px;font-size:12px;color:#f0f2f5;">(CS300)</span>
<span class="t" style="left:68px;top:847px;font-size:12px;color:#f0f2f5;">FLANGE WN,FL,RF,300,</span>
<div style="left:60px;top:860px;width:100px;height:8px;overflow:hidden"><span class="t" style="left:8px;top:3px;font-size:12px;color:#f0f2f5">(CS300)</span></div>
<svg style="left:0;top:0" width="228" height="868" viewBox="0 0 228 868"><defs><linearGradient id="rg" x1="0" y1="0" x2="1" y2="1"><stop offset="0" stop-color="#e4e7eb"/><stop offset="0.55" stop-color="#b4b9c1"/><stop offset="1" stop-color="#8f959e"/></linearGradient></defs><g transform="translate(50 202) rotate(-30)"><ellipse cx="2" cy="0" rx="9" ry="14" fill="#8a9099"/><ellipse cx="-0.500" cy="0" rx="9" ry="14" fill="url(#rg)"/></g><g transform="translate(49 300) rotate(-20)"><ellipse cx="2" cy="0" rx="11" ry="12" fill="#8a9099"/><ellipse cx="-0.500" cy="0" rx="11" ry="12" fill="url(#rg)"/></g><path d="M41 290 L48 286 L50 289 L43 293 Z" fill="#2a303a"/><g transform="translate(49 398) rotate(-20)"><ellipse cx="2" cy="0" rx="12" ry="14" fill="#8a9099"/><ellipse cx="-0.500" cy="0" rx="12" ry="14" fill="url(#rg)"/><ellipse cx="1" cy="-0.500" rx="6.2" ry="8.1" fill="#767d88"/><ellipse cx="2.200" cy="-0.500" rx="4.8" ry="6.6" fill="#3b4453"/></g><g transform="translate(42 496) rotate(-20)"><ellipse cx="2" cy="0" rx="8" ry="10" fill="#8a9099"/><ellipse cx="-0.500" cy="0" rx="8" ry="10" fill="url(#rg)"/><ellipse cx="1" cy="-0.500" rx="4.2" ry="5.8" fill="#767d88"/><ellipse cx="2.200" cy="-0.500" rx="3.2" ry="4.7" fill="#3b4453"/></g><g transform="translate(54 496) rotate(-20)"><ellipse cx="2" cy="0" rx="8" ry="10" fill="#8a9099"/><ellipse cx="-0.500" cy="0" rx="8" ry="10" fill="url(#rg)"/><ellipse cx="1" cy="-0.500" rx="4.2" ry="5.8" fill="#767d88"/><ellipse cx="2.200" cy="-0.500" rx="3.2" ry="4.7" fill="#3b4453"/></g><g transform="translate(50 594) rotate(-25)"><ellipse cx="2" cy="0" rx="9.5" ry="11.5" fill="#8a9099"/><ellipse cx="-0.500" cy="0" rx="9.5" ry="11.5" fill="url(#rg)"/><ellipse cx="1" cy="-0.500" rx="4.9" ry="6.7" fill="#767d88"/><ellipse cx="2.200" cy="-0.500" rx="3.8" ry="5.4" fill="#3b4453"/></g><g transform="translate(50 636) rotate(-25)"><ellipse cx="2" cy="0" rx="9.5" ry="11.5" fill="#8a9099"/><ellipse cx="-0.500" cy="0" rx="9.5" ry="11.5" fill="url(#rg)"/><ellipse cx="1" cy="-0.500" rx="4.9" ry="6.7" fill="#767d88"/><ellipse cx="2.200" cy="-0.500" rx="3.8" ry="5.4" fill="#3b4453"/></g><g transform="translate(48 678) rotate(-25)"><ellipse cx="2" cy="0" rx="8" ry="11" fill="#8a9099"/><ellipse cx="-0.500" cy="0" rx="8" ry="11" fill="url(#rg)"/><ellipse cx="1" cy="-0.500" rx="4.2" ry="6.4" fill="#767d88"/><ellipse cx="2.200" cy="-0.500" rx="3.2" ry="5.2" fill="#3b4453"/></g><g transform="translate(50 720) rotate(-25)"><ellipse cx="2" cy="0" rx="9.5" ry="11.5" fill="#8a9099"/><ellipse cx="-0.500" cy="0" rx="9.5" ry="11.5" fill="url(#rg)"/><ellipse cx="1" cy="-0.500" rx="4.9" ry="6.7" fill="#767d88"/><ellipse cx="2.200" cy="-0.500" rx="3.8" ry="5.4" fill="#3b4453"/></g><g transform="translate(48 818) rotate(-20)"><ellipse cx="2" cy="0" rx="12" ry="14" fill="#8a9099"/><ellipse cx="-0.500" cy="0" rx="12" ry="14" fill="url(#rg)"/><ellipse cx="1" cy="-0.500" rx="6.2" ry="8.1" fill="#767d88"/><ellipse cx="2.200" cy="-0.500" rx="4.8" ry="6.6" fill="#3b4453"/></g><g transform="translate(48 858) rotate(-20)"><ellipse cx="2" cy="0" rx="11" ry="13" fill="#8a9099"/><ellipse cx="-0.500" cy="0" rx="11" ry="13" fill="url(#rg)"/><ellipse cx="1" cy="-0.500" rx="5.7" ry="7.5" fill="#767d88"/><ellipse cx="2.200" cy="-0.500" rx="4.4" ry="6.1" fill="#3b4453"/></g><rect x="32" y="380" width="6" height="1" fill="#5a6372"/><rect x="32" y="478" width="6" height="1" fill="#5a6372"/><rect x="32" y="576" width="6" height="1" fill="#5a6372"/><rect x="32" y="618" width="6" height="1" fill="#5a6372"/><rect x="32" y="660" width="6" height="1" fill="#5a6372"/><rect x="32" y="702" width="6" height="1" fill="#5a6372"/><rect x="32" y="794" width="6" height="1" fill="#5a6372"/><rect x="32" y="842" width="6" height="1" fill="#5a6372"/></svg>
</div><!--/RIGHT-->
<!--BOT--><div id="cmd">
<div style="left:0;top:-1px;width:1391px;height:2px;background:#3b4453"></div><div style="left:0;top:0;width:2px;height:67px;background:#3b4453"></div>
<div style="left:2px;top:0;width:25px;height:67px;background:#2a313c"></div>
<div style="left:27px;top:1px;width:1364px;height:45px;background:#c9c9c9"></div>
<div style="left:27px;top:46px;width:1364px;height:21px;background:#fdfdfd;border-top:1px solid #8a8a8a"></div>
<svg style="left:6px;top:5px" width="18" height="6" viewBox="0 0 18 6"><path d="M0 1 H18 M0 4 H18" stroke="#f0f0f0" stroke-width="2" stroke-dasharray="2 1"/></svg>
<svg style="left:8px;top:16px" width="10" height="10" viewBox="0 0 10 10"><path d="M1 1 L9 9 M9 1 L1 9" stroke="#f0f0f0" stroke-width="1.800"/></svg>
<svg style="left:6px;top:38px" width="16" height="16" viewBox="0 0 16 16"><path d="M2 14 L9 7" stroke="#f0f0f0" stroke-width="2.600" stroke-linecap="round"/><path d="M8 3 A4 4 0 0 1 13 2 L10.500 5 L11.500 6 L14.500 3.500 A4 4 0 0 1 9 8 Z" fill="#f0f0f0"/></svg>
<span class="t" style="left:29px;top:16px;font-family:'Liberation Mono',monospace;font-size:12.5px;color:#1a1a1a;letter-spacing:-0.72px">Command:</span>
<span class="t" style="left:29px;top:31px;font-family:'Liberation Mono',monospace;font-size:12.5px;color:#1a1a1a;letter-spacing:-0.72px">Command: _PLANTEQUIPMENTCREATE</span>
<svg style="left:31px;top:50px" width="16" height="12" viewBox="0 0 16 12"><rect x="0.500" y="0.500" width="15" height="11" fill="#fff" stroke="#444"/><rect x="0.500" y="0.500" width="15" height="2.500" fill="#555"/><path d="M3 5.500 L5.500 7.500 L3 9.500 M7 9.500 H10" fill="none" stroke="#333" stroke-width="1"/></svg>
<div class="arr" style="left:50px;top:54px;border-top-color:#555"></div>
<span class="t" style="left:63px;top:51px;font-family:'Liberation Mono',monospace;font-style:italic;font-size:12px;color:#8c8c8c;letter-spacing:-0.27px">Type a command</span>
</div>
<div id="status">
<div style="left:1339px;top:3px;width:48px;height:23px;background:#2c3440"></div>
<span class="t" style="left:1343px;top:8px;font-size:12.5px;color:#f0f2f5;letter-spacing:-0.4px">MODEL</span>
<div style="left:1390px;top:4px;width:22px;height:21px;background:#4b7cb8"></div>
<div style="left:1480px;top:4px;width:22px;height:21px;background:#4b7cb8"></div>
<div style="left:1559px;top:4px;width:21px;height:21px;background:#4b7cb8"></div>
<div style="left:1583px;top:4px;width:22px;height:21px;background:#4b7cb8"></div>
<div style="left:1625px;top:4px;width:22px;height:21px;background:#4b7cb8"></div>
<div style="left:1800px;top:4px;width:23px;height:21px;background:#4b7cb8"></div>
<svg style="left:1393px;top:6px" width="16" height="16" viewBox="0 0 16 16"><path d="M5 0 V16 M11 0 V16 M0 5 H16 M0 11 H16" stroke="#f0f2f5" stroke-width="1.300"/></svg>
<svg style="left:1418px;top:8px" width="16" height="13" viewBox="0 0 16 13"><path d="M1 1 H15 M1 6 H15 M1 11 H15" stroke="#f0f2f5" stroke-width="2" stroke-dasharray="2 3"/></svg>
<div class="arrw" style="left:1441px;top:13px;border-width:4px 3.500px 0 3.500px"></div>
<div class="arrw" style="left:1507px;top:13px;border-width:4px 3.500px 0 3.500px"></div>
<div class="arrw" style="left:1546px;top:13px;border-width:4px 3.500px 0 3.500px"></div>
<div class="arrw" style="left:1610px;top:13px;border-width:4px 3.500px 0 3.500px"></div>
<div class="arrw" style="left:1718px;top:13px;border-width:4px 3.500px 0 3.500px"></div>
<div class="arrw" style="left:1760px;top:13px;border-width:4px 3.500px 0 3.500px"></div>
<div style="left:1453px;top:4px;width:1px;height:21px;background:#3a4250"></div>
<svg style="left:1458px;top:6px" width="17" height="16" viewBox="0 0 17 16"><path d="M2 0 V14 H16 M2 9 H7 V14" fill="none" stroke="#f0f2f5" stroke-width="1.400"/></svg>
<svg style="left:1483px;top:6px" width="17" height="17" viewBox="0 0 17 17"><circle cx="8" cy="9" r="6" fill="none" stroke="#f0f2f5" stroke-width="1.400"/><path d="M8 9 L15 2 M8 9 H16" stroke="#f0f2f5" stroke-width="1.200"/></svg>
<svg style="left:1521px;top:5px" width="16" height="18" viewBox="0 0 16 18"><path d="M8 0 V18" stroke="#50c878" stroke-width="1.300"/><path d="M1 3 L15 17" stroke="#e85050" stroke-width="1.300"/><path d="M8 9 L14 5" stroke="#f0f2f5" stroke-width="1.200"/></svg>
<svg style="left:1562px;top:7px" width="16" height="16" viewBox="0 0 16 16"><path d="M1 14 H15 M1 14 L14 2" fill="none" stroke="#f0f2f5" stroke-width="1.400"/></svg>
<svg style="left:1586px;top:6px" width="17" height="17" viewBox="0 0 17 17"><rect x="3" y="3" width="13" height="13" fill="none" stroke="#f0f2f5" stroke-width="1.300"/><rect x="0.500" y="0.500" width="5" height="5" fill="#4b7cb8" stroke="#f0f2f5" stroke-width="1.200"/></svg>
<svg style="left:1628px;top:5px" width="20" height="19" viewBox="0 0 20 19"><path d="M8 1 L13 15 L8 11 L3 15 Z" fill="#f0f2f5"/><path d="M0 18 L5 11 M16 18 L11 11" stroke="#f0f2f5" stroke-width="1.500"/><circle cx="15" cy="4" r="2" fill="none" stroke="#f0f2f5" stroke-width="1"/></svg>
<svg style="left:1652px;top:5px" width="20" height="19" viewBox="0 0 20 19"><path d="M8 1 L13 15 L8 11 L3 15 Z" fill="#c8ccd4"/><path d="M0 18 L5 11 M16 18 L11 11" stroke="#c8ccd4" stroke-width="1.500"/><path d="M15 1 L16 4 L19 5 L16 6 L15 9 L14 6 L11 5 L14 4 Z" fill="#c8ccd4"/></svg>
<svg style="left:1677px;top:5px" width="20" height="19" viewBox="0 0 20 19"><path d="M8 1 L13 15 L8 11 L3 15 Z" fill="#c8ccd4"/><path d="M0 18 L5 11 M16 18 L11 11" stroke="#c8ccd4" stroke-width="1.500"/></svg>
<span class="t" style="left:1700px;top:8px;font-size:12.5px;color:#f0f2f5;letter-spacing:-0.6px;font-weight:bold">1:1</span>
<div style="left:1729px;top:4px;width:1px;height:21px;background:#3a4250"></div>
<svg style="left:1735px;top:5px" width="18" height="18" viewBox="0 0 18 18"><rect x="7.500" y="0" width="3" height="4" fill="#f0f2f5" transform="rotate(0 9 9)"/><rect x="7.500" y="0" width="3" height="4" fill="#f0f2f5" transform="rotate(45 9 9)"/><rect x="7.500" y="0" width="3" height="4" fill="#f0f2f5" transform="rotate(90 9 9)"/><rect x="7.500" y="0" width="3" height="4" fill="#f0f2f5" transform="rotate(135 9 9)"/><rect x="7.500" y="0" width="3" height="4" fill="#f0f2f5" transform="rotate(180 9 9)"/><rect x="7.500" y="0" width="3" height="4" fill="#f0f2f5" transform="rotate(225 9 9)"/><rect x="7.500" y="0" width="3" height="4" fill="#f0f2f5" transform="rotate(270 9 9)"/><rect x="7.500" y="0" width="3" height="4" fill="#f0f2f5" transform="rotate(315 9 9)"/><circle cx="9" cy="9" r="5" fill="none" stroke="#f0f2f5" stroke-width="3.500"/></svg>
<svg style="left:1775px;top:5px" width="18" height="18" viewBox="0 0 18 18"><path d="M9 0 V18 M0 9 H18" stroke="#f0f2f5" stroke-width="2"/></svg>
<svg style="left:1803px;top:6px" width="18" height="18" viewBox="0 0 18 18"><rect x="1" y="1" width="6" height="6" fill="none" stroke="#f0f2f5" stroke-width="1.200"/><circle cx="14" cy="5" r="3" fill="none" stroke="#f0f2f5" stroke-width="1.200"/><path d="M8 9 L12 16 H4 Z" fill="none" stroke="#f0f2f5" stroke-width="1.200"/></svg>
<svg style="left:1828px;top:5px" width="16" height="19" viewBox="0 0 16 19"><path d="M1 1 H10 L15 6 V18 H1 Z M10 1 V6 H15" fill="none" stroke="#58a8e0" stroke-width="1.200"/><path d="M4 10 L8 13 L4 16 Z M12 10 L8 13 L12 16 Z M8 13 V9 M6 9 H10" fill="none" stroke="#58a8e0" stroke-width="1"/></svg>
<svg style="left:1848px;top:5px" width="18" height="19" viewBox="0 0 18 19"><rect x="2" y="6" width="12" height="10" fill="#e8b838"/><path d="M2 3 V8 M2 3 H12 M12 1 V5" stroke="#58a8e0" stroke-width="1.300" fill="none"/><circle cx="2.500" cy="3" r="1.500" fill="#58a8e0"/><path d="M7 12 L10 16 L17 8" fill="none" stroke="#38b058" stroke-width="2.200"/></svg>
<div style="left:1868px;top:4px;width:1px;height:21px;background:#3a4250"></div>
<svg style="left:1873px;top:8px" width="18" height="13" viewBox="0 0 18 13"><rect x="0.700" y="0.700" width="16" height="11" fill="none" stroke="#f0f2f5" stroke-width="1.300"/><path d="M9.500 3 H14 V6.500 M14 3 L10.500 6 M7.500 9.500 H3.500 V6 M3.500 9.500 L7 6.500" fill="none" stroke="#f0f2f5" stroke-width="1"/></svg>
<svg style="left:1898px;top:7px" width="16" height="15" viewBox="0 0 16 15"><path d="M0 2 H16 M0 7.500 H16 M0 13 H16" stroke="#f0f2f5" stroke-width="2.200"/></svg>
</div><!--/BOT-->
<!--DLG--><div id="dlg1" class="dlg" style="left:293px;top:391px;width:771px;height:588px;box-shadow:0 2px 10px rgba(0,0,0,0.5)">
<div style="left:0;top:0;width:771px;height:30px;background:#fff"></div>
<svg style="left:10px;top:7px" width="13" height="13" viewBox="0 0 13 13"><path d="M1 12 L4.500 1 H8 L11.500 11 H8.500 L7.800 8.500 L4.500 10 L4 12 Z M5.300 7 L7.200 6.200 L6.300 3.200 Z" fill="#b8222a" fill-rule="evenodd"/></svg>
<span class="t" style="left:29px;top:9px;font-size:12px;color:#8a8a8a;">Create Equipment</span>
<svg style="left:750px;top:9px" width="11" height="11" viewBox="0 0 11 11"><path d="M0.500 0.500 L10.500 10.500 M10.500 0.500 L0.500 10.500" stroke="#555" stroke-width="1"/></svg>
<div style="left:12px;top:42px;width:200px;height:23px;background:#fff;border:1px solid #adadad"></div>
<div style="left:190px;top:43px;width:21px;height:21px;background:#e5e5e5;border-left:1px solid #adadad"></div>
<svg style="left:195px;top:50px" width="11" height="7" viewBox="0 0 11 7"><path d="M1 1 L5.500 5.500 L10 1" fill="none" stroke="#444" stroke-width="1.200"/></svg>
<span class="t" style="left:18px;top:46px;font-size:12px;color:#000;letter-spacing:-0.85px">Pump - Centrifugal Pump</span>
<svg style="left:12px;top:76px" width="200" height="200" viewBox="0 0 200 200"><rect width="200" height="200" fill="#000"/><defs><linearGradient id="im" gradientUnits="userSpaceOnUse" x1="118" y1="48" x2="140" y2="86"><stop offset="0" stop-color="#7c8286"/><stop offset="0.35" stop-color="#c0c4c6"/><stop offset="0.7" stop-color="#a0a4a8"/><stop offset="1" stop-color="#5c6266"/></linearGradient><radialGradient id="iv" gradientUnits="userSpaceOnUse" cx="62" cy="96" r="26"><stop offset="0" stop-color="#b8bcc0"/><stop offset="0.7" stop-color="#90969a"/><stop offset="1" stop-color="#60686c"/></radialGradient><linearGradient id="ic" gradientUnits="userSpaceOnUse" x1="80" y1="78" x2="90" y2="100"><stop offset="0" stop-color="#b4b8bc"/><stop offset="1" stop-color="#6c7276"/></linearGradient></defs><path d="M43.5 120.4 L130.6 72.6 L157.4 87.0 L70.4 136.1 Z" fill="#8a8a8a"/><path d="M43.5 120.4 L70.4 136.1 L70.4 149.6 L43.5 133.7 Z" fill="#aaaaaa"/><path d="M70.4 136.1 L157.4 87.0 L157.4 99.6 L70.4 149.6 Z" fill="#7a7a7a"/><path d="M47.8 114.8 L62.0 107.0 L82.4 118.5 L82.4 124.4 L70.7 130.6 L47.8 120.4 Z" fill="#a4a4a4"/><path d="M47.8 114.8 L70.7 127.8 L70.7 136.1 L47.8 123.1 Z" fill="#b8b8b8"/><path d="M70.7 127.8 L82.4 121.3 L82.4 127.8 L70.7 136.1 Z" fill="#8c8c8c"/><path d="M109.3 84.3 L138.0 68.5 L150.9 74.1 L122.2 90.7 Z" fill="#a8a8a8"/><path d="M109.3 84.3 L122.2 90.7 L122.2 100.9 L109.3 93.5 Z" fill="#b4b4b4"/><path d="M122.2 90.7 L150.9 74.1 L150.9 85.6 L122.2 100.9 Z" fill="#888888"/><path d="M100.9 63.0 L140.7 41.1 L148.1 41.7 L156.5 50.9 L157.0 61.1 L114.8 88.5 L103.7 87.0 Z" fill="url(#im)"/><ellipse cx="149.1" cy="52.4" rx="7.4" ry="12.2" transform="rotate(-20 149.1 52.4)" fill="#a8acb0"/><ellipse cx="147.2" cy="52.8" rx="7.0" ry="11.9" transform="rotate(-20 147.2 52.8)" fill="url(#im)"/><ellipse cx="107.0" cy="75.6" rx="10.7" ry="15.2" transform="rotate(-20 107.0 75.6)" fill="#b4b8bc"/><ellipse cx="108.3" cy="76.3" rx="8.9" ry="13.3" transform="rotate(-20 108.3 76.3)" fill="#7e8488"/><ellipse cx="110.6" cy="77.0" rx="7.0" ry="11.5" transform="rotate(-20 110.6 77.0)" fill="#8c9296"/><path d="M92.6 78.7 L108.3 73.7 L109.6 81.5 L94.8 89.3 Z" fill="url(#ic)"/><ellipse cx="108.9" cy="77.8" rx="1.9" ry="4.1" transform="rotate(-10 108.9 77.8)" fill="#9a9ea2"/><path d="M71.3 84.3 L81.5 80.0 L92.6 78.7 L94.8 89.3 L87.0 100.0 L81.5 106.5 Z" fill="url(#ic)"/><path d="M60.2 75.0 L70.0 75.0 L70.0 86.1 L60.2 86.1 Z" fill="#8a9094"/><ellipse cx="64.8" cy="75.6" rx="8.5" ry="4.8" transform="rotate(-8 64.8 75.6)" fill="#7c8286"/><ellipse cx="64.8" cy="74.1" rx="8.5" ry="4.8" transform="rotate(-8 64.8 74.1)" fill="#b4b8bc"/><ellipse cx="64.8" cy="73.7" rx="4.8" ry="2.6" transform="rotate(-8 64.8 73.7)" fill="#8a8e92"/><path d="M62.0 72.6 L67.6 75.0" fill="none" stroke="#e8e8e8" stroke-width="0.6"/><path d="M67.6 72.2 L62.0 75.4" fill="none" stroke="#e8e8e8" stroke-width="0.6"/><ellipse cx="64.8" cy="103.7" rx="18.9" ry="19.3" transform="rotate(0 64.8 103.7)" fill="url(#iv)"/><ellipse cx="57.8" cy="107.0" rx="10.7" ry="13.0" transform="rotate(-12 57.8 107.0)" fill="#6c7478"/><ellipse cx="56.7" cy="107.4" rx="9.6" ry="12.2" transform="rotate(-12 56.7 107.4)" fill="#a4a8ac"/><ellipse cx="55.9" cy="107.8" rx="7.4" ry="9.6" transform="rotate(-12 55.9 107.8)" fill="#7c8488"/><ellipse cx="55.6" cy="107.8" rx="5.9" ry="7.8" transform="rotate(-12 55.6 107.8)" fill="#b0b4b8"/><ellipse cx="55.2" cy="107.8" rx="3.7" ry="5.0" transform="rotate(-12 55.2 107.8)" fill="#8a9094"/><path d="M51.9 103.7 L58.9 111.1" fill="none" stroke="#f0f0f0" stroke-width="0.6"/><path d="M55.6 102.8 L55.6 112.0" fill="none" stroke="#f0f0f0" stroke-width="0.6"/><path d="M31.5 54.3 L62.0 71.9" fill="none" stroke="#fff" stroke-width="0.7"/><path d="M19.4 61.5 L43.0 75.0 L43.0 129.6" fill="none" stroke="#fff" stroke-width="0.7"/><path d="M13.3 76.3 L56.5 52.4" fill="none" stroke="#fff" stroke-width="0.7"/><path d="M23.1 86.7 L55.6 105.9" fill="none" stroke="#fff" stroke-width="0.7"/><path d="M24.1 122.6 L42.2 133.0" fill="none" stroke="#fff" stroke-width="0.7"/><path d="M29.3 91.7 L29.3 125.9" fill="none" stroke="#fff" stroke-width="0.7"/><path d="M19.4 148.1 L41.1 136.1" fill="none" stroke="#fff" stroke-width="0.7"/><path d="M45.9 163.0 L67.0 150.9" fill="none" stroke="#fff" stroke-width="0.7"/><path d="M29.6 142.6 L55.0 157.4" fill="none" stroke="#fff" stroke-width="0.7"/><path d="M71.3 150.9 L90.2 161.5" fill="none" stroke="#fff" stroke-width="0.7"/><path d="M158.9 100.0 L178.1 111.1" fill="none" stroke="#fff" stroke-width="0.7"/><path d="M84.3 157.4 L170.0 108.3" fill="none" stroke="#fff" stroke-width="0.7"/><path d="M158.9 87.0 L178.1 97.6" fill="none" stroke="#fff" stroke-width="0.7"/><path d="M171.3 75.9 L171.3 124.1" fill="none" stroke="#c8c8c8" stroke-width="1"/><path d="M0 0 L-7.500 -2.300 L-7.500 2.300 Z" fill="#fff" transform="translate(43.0 59.6) rotate(151)"/><path d="M0 0 L-7.500 -2.300 L-7.500 2.300 Z" fill="#fff" transform="translate(29.6 67.4) rotate(-29)"/><path d="M0 0 L-7.500 -2.300 L-7.500 2.300 Z" fill="#fff" transform="translate(29.3 91.7) rotate(-90)"/><path d="M0 0 L-7.500 -2.300 L-7.500 2.300 Z" fill="#fff" transform="translate(29.3 125.9) rotate(90)"/><path d="M0 0 L-7.500 -2.300 L-7.500 2.300 Z" fill="#fff" transform="translate(29.6 142.6) rotate(210)"/><path d="M0 0 L-7.500 -2.300 L-7.500 2.300 Z" fill="#fff" transform="translate(55.0 157.4) rotate(30)"/><path d="M0 0 L-7.500 -2.300 L-7.500 2.300 Z" fill="#fff" transform="translate(84.3 157.4) rotate(150)"/><path d="M0 0 L-7.500 -2.300 L-7.500 2.300 Z" fill="#fff" transform="translate(170.0 108.3) rotate(-30)"/><path d="M0 0 L-7.500 -2.300 L-7.500 2.300 Z" fill="#fff" transform="translate(171.3 92.2) rotate(90)"/><path d="M0 0 L-7.500 -2.300 L-7.500 2.300 Z" fill="#fff" transform="translate(171.3 105.6) rotate(-90)"/><text x="50.4" y="52.2" font-family="Liberation Sans,sans-serif" font-size="11.500" font-weight="bold" font-style="italic" fill="#fff" transform="rotate(-27 50.4 52.2)" letter-spacing="0.8">SI</text><text x="7.8" y="105.9" font-family="Liberation Sans,sans-serif" font-size="11.500" font-weight="bold" font-style="italic" fill="#fff" transform="rotate(27 7.8 105.9)" letter-spacing="0.8">SO</text><text x="20.0" y="155.9" font-family="Liberation Sans,sans-serif" font-size="11.500" font-weight="bold" font-style="italic" fill="#fff" transform="rotate(27 20.0 155.9)" letter-spacing="0.8">SB</text><text x="125.6" y="144.8" font-family="Liberation Sans,sans-serif" font-size="11.500" font-weight="bold" font-style="italic" fill="#fff" transform="rotate(-27 125.6 144.8)" letter-spacing="0.8">SL</text><text x="178.7" y="109.3" font-family="Liberation Sans,sans-serif" font-size="11.500" font-weight="bold" font-style="italic" fill="#fff" transform="rotate(25 178.7 109.3)" letter-spacing="0.8">SH</text></svg>
<div style="left:226px;top:43px;width:101px;height:21px;background:#f0f0f0;border-top:1px solid #fff;border-left:1px solid #fff;border-right:2px solid #696969"></div>
<div style="left:328px;top:45px;width:96px;height:18px;background:#f0f0f0;border-top:1px solid #fff;border-right:2px solid #696969"></div>
<span class="t" style="left:226px;top:47px;font-size:12px;color:#000;width:99px;text-align:center;letter-spacing:-0.4px">Equipment</span>
<span class="t" style="left:328px;top:47px;font-size:12px;color:#000;width:94px;text-align:center;letter-spacing:-0.4px">Properties</span>
<div style="left:225px;top:63px;width:534px;height:456px;background:#fff;border-right:2px solid #696969;border-bottom:2px solid #696969;border-left:1px solid #fff;border-top:1px solid #fff"></div>
<div style="left:225px;top:63px;width:532px;height:454px;border-right:1px solid #a0a0a0;border-bottom:1px solid #a0a0a0"></div>
<div style="left:244px;top:67px;width:247px;height:100px;background:#f0f0f0"></div>
<div style="left:244px;top:66px;width:247px;height:19px;background:#808080"></div>
<span class="t" style="left:248px;top:70px;font-size:11px;color:#fff;font-weight:bold;letter-spacing:-0.5px">General</span>
<div style="left:244px;top:85px;width:124px;height:22px;background:#f0f0f0;border:1px solid #a0a0a0"></div>
<div style="left:367px;top:85px;width:124px;height:22px;background:#fff;border:1px solid #a0a0a0"></div>
<div style="left:244px;top:106px;width:124px;height:23px;background:#f0f0f0;border:1px solid #a0a0a0"></div>
<div style="left:367px;top:106px;width:124px;height:23px;background:#3399ff;border:1px solid #a0a0a0"></div>
<span class="t" style="left:248px;top:90px;font-size:12px;color:#000;letter-spacing:-0.7px">Long Description (Size)</span>
<span class="t" style="left:248px;top:112px;font-size:12px;color:#000;">Tag</span>
<span class="t" style="left:371px;top:112px;font-size:12px;color:#e8f0ff;">P-?</span>
<div style="left:244px;top:178px;width:247px;height:18px;background:#808080"></div>
<span class="t" style="left:248px;top:181px;font-size:11px;color:#fff;font-weight:bold;letter-spacing:-0.6px">Dimensions</span>
<div style="left:244px;top:196px;width:247px;height:312px;overflow:hidden">
<div style="left:0;top:0px;width:116px;height:23px;background:#a0a0a0;border:1px solid #a0a0a0"></div>
<div style="left:115px;top:0px;width:115px;height:23px;background:#fff;border:1px solid #a0a0a0"></div>
<span class="t" style="left:4px;top:6px;font-size:12px;color:#000;letter-spacing:-0.5px">SL</span>
<span class="t" style="left:119px;top:6px;font-size:12px;color:#000;letter-spacing:-0.5px">5'-4&quot;</span>
<div style="left:0;top:22px;width:116px;height:23px;background:#f0f0f0;border:1px solid #a0a0a0"></div>
<div style="left:115px;top:22px;width:115px;height:23px;background:#fff;border:1px solid #a0a0a0"></div>
<span class="t" style="left:4px;top:28px;font-size:12px;color:#000;letter-spacing:-0.5px">SB</span>
<span class="t" style="left:119px;top:28px;font-size:12px;color:#000;letter-spacing:-0.5px">1'-9&quot;</span>
<div style="left:0;top:44px;width:116px;height:23px;background:#f0f0f0;border:1px solid #a0a0a0"></div>
<div style="left:115px;top:44px;width:115px;height:23px;background:#fff;border:1px solid #a0a0a0"></div>
<span class="t" style="left:4px;top:50px;font-size:12px;color:#000;letter-spacing:-0.5px">SH</span>
<span class="t" style="left:119px;top:50px;font-size:12px;color:#000;letter-spacing:-0.5px">4 3/4&quot;</span>
<div style="left:0;top:66px;width:116px;height:23px;background:#f0f0f0;border:1px solid #a0a0a0"></div>
<div style="left:115px;top:66px;width:115px;height:23px;background:#fff;border:1px solid #a0a0a0"></div>
<span class="t" style="left:4px;top:72px;font-size:12px;color:#000;letter-spacing:-0.5px">SI</span>
<span class="t" style="left:119px;top:72px;font-size:12px;color:#000;letter-spacing:-0.5px">4 1/2&quot;</span>
<div style="left:0;top:88px;width:116px;height:23px;background:#f0f0f0;border:1px solid #a0a0a0"></div>
<div style="left:115px;top:88px;width:115px;height:23px;background:#fff;border:1px solid #a0a0a0"></div>
<span class="t" style="left:4px;top:94px;font-size:12px;color:#000;letter-spacing:-0.5px">SO</span>
<span class="t" style="left:119px;top:94px;font-size:12px;color:#000;letter-spacing:-0.5px">1'-2 3/4&quot;</span>
<div style="left:0;top:110px;width:116px;height:23px;background:#f0f0f0;border:1px solid #a0a0a0"></div>
<div style="left:115px;top:110px;width:115px;height:23px;background:#fff;border:1px solid #a0a0a0"></div>
<span class="t" style="left:4px;top:116px;font-size:12px;color:#000;letter-spacing:-0.5px">HC</span>
<span class="t" style="left:119px;top:116px;font-size:12px;color:#000;letter-spacing:-0.5px">7&quot;</span>
<div style="left:0;top:132px;width:116px;height:23px;background:#f0f0f0;border:1px solid #a0a0a0"></div>
<div style="left:115px;top:132px;width:115px;height:23px;background:#fff;border:1px solid #a0a0a0"></div>
<span class="t" style="left:4px;top:138px;font-size:12px;color:#000;letter-spacing:-0.5px">DC</span>
<span class="t" style="left:119px;top:138px;font-size:12px;color:#000;letter-spacing:-0.5px">7 1/2&quot;</span>
<div style="left:0;top:154px;width:116px;height:23px;background:#f0f0f0;border:1px solid #a0a0a0"></div>
<div style="left:115px;top:154px;width:115px;height:23px;background:#fff;border:1px solid #a0a0a0"></div>
<span class="t" style="left:4px;top:160px;font-size:12px;color:#000;letter-spacing:-0.5px">L1BB</span>
<span class="t" style="left:119px;top:160px;font-size:12px;color:#000;letter-spacing:-0.5px">1'-2&quot;</span>
<div style="left:0;top:176px;width:116px;height:23px;background:#f0f0f0;border:1px solid #a0a0a0"></div>
<div style="left:115px;top:176px;width:115px;height:23px;background:#fff;border:1px solid #a0a0a0"></div>
<span class="t" style="left:4px;top:182px;font-size:12px;color:#000;letter-spacing:-0.5px">D1BB</span>
<span class="t" style="left:119px;top:182px;font-size:12px;color:#000;letter-spacing:-0.5px">5 1/2&quot;</span>
<div style="left:0;top:198px;width:116px;height:23px;background:#f0f0f0;border:1px solid #a0a0a0"></div>
<div style="left:115px;top:198px;width:115px;height:23px;background:#fff;border:1px solid #a0a0a0"></div>
<span class="t" style="left:4px;top:204px;font-size:12px;color:#000;letter-spacing:-0.5px">D2BB</span>
<span class="t" style="left:119px;top:204px;font-size:12px;color:#000;letter-spacing:-0.5px">4&quot;</span>
<div style="left:0;top:220px;width:116px;height:23px;background:#f0f0f0;border:1px solid #a0a0a0"></div>
<div style="left:115px;top:220px;width:115px;height:23px;background:#fff;border:1px solid #a0a0a0"></div>
<span class="t" style="left:4px;top:226px;font-size:12px;color:#000;letter-spacing:-0.5px">L2BB</span>
<span class="t" style="left:119px;top:226px;font-size:12px;color:#000;letter-spacing:-0.5px">10&quot;</span>
<div style="left:0;top:242px;width:116px;height:23px;background:#f0f0f0;border:1px solid #a0a0a0"></div>
<div style="left:115px;top:242px;width:115px;height:23px;background:#fff;border:1px solid #a0a0a0"></div>
<span class="t" style="left:4px;top:248px;font-size:12px;color:#000;letter-spacing:-0.5px">D1MS</span>
<span class="t" style="left:119px;top:248px;font-size:12px;color:#000;letter-spacing:-0.5px">8&quot;</span>
<div style="left:0;top:264px;width:116px;height:23px;background:#f0f0f0;border:1px solid #a0a0a0"></div>
<div style="left:115px;top:264px;width:115px;height:23px;background:#fff;border:1px solid #a0a0a0"></div>
<span class="t" style="left:4px;top:270px;font-size:12px;color:#000;letter-spacing:-0.5px">L1MS</span>
<span class="t" style="left:119px;top:270px;font-size:12px;color:#000;letter-spacing:-0.5px">0&quot;</span>
<div style="left:0;top:286px;width:116px;height:23px;background:#f0f0f0;border:1px solid #a0a0a0"></div>
<div style="left:115px;top:286px;width:115px;height:23px;background:#fff;border:1px solid #a0a0a0"></div>
<span class="t" style="left:4px;top:292px;font-size:12px;color:#000;letter-spacing:-0.5px">LMS</span>
<span class="t" style="left:119px;top:292px;font-size:12px;color:#000;letter-spacing:-0.5px">2'-3&quot;</span>
<div style="left:0;top:308px;width:116px;height:23px;background:#f0f0f0;border:1px solid #a0a0a0"></div>
<div style="left:115px;top:308px;width:115px;height:23px;background:#fff;border:1px solid #a0a0a0"></div>
<div style="left:230px;top:0;width:17px;height:312px;background:#f0f0f0"></div>
<div style="left:230px;top:17px;width:17px;height:263px;background:#cdcdcd"></div>
<svg style="left:234px;top:6px" width="9" height="7" viewBox="0 0 9 7"><path d="M1 5.500 L4.500 1.500 L8 5.500" fill="none" stroke="#444" stroke-width="1.500"/></svg>
<svg style="left:234px;top:301px" width="9" height="7" viewBox="0 0 9 7"><path d="M1 1.500 L4.500 5.500 L8 1.500" fill="none" stroke="#444" stroke-width="1.500"/></svg>
</div>
<div class="btn" style="left:524px;top:547px;width:72px;height:21px;border:2px solid #0078d7"></div><span class="t" style="left:524px;top:551px;font-size:12px;color:#000;width:72px;text-align:center;letter-spacing:-0.4px">Create</span>
<div class="btn" style="left:604px;top:547px;width:73px;height:21px;border:1px solid #adadad"></div><span class="t" style="left:604px;top:551px;font-size:12px;color:#000;width:73px;text-align:center;letter-spacing:-0.4px">Cancel</span>
<div class="btn" style="left:685px;top:547px;width:73px;height:21px;border:1px solid #adadad"></div><span class="t" style="left:685px;top:551px;font-size:12px;color:#000;width:73px;text-align:center;letter-spacing:-0.4px">Help</span>
<div class="btn" style="left:17px;top:547px;width:82px;height:21px"></div>
<svg style="left:20px;top:550px" width="16" height="15" viewBox="0 0 16 15"><path d="M1 3.500 H4 L5 1.500 H11 L12 3.500 H15 V13.500 H1 Z" fill="none" stroke="#333" stroke-width="1"/><circle cx="8" cy="8.500" r="3.500" fill="none" stroke="#333" stroke-width="1"/><path d="M3 3.500 V13.500" stroke="#333" stroke-width="0.800"/></svg>
<span class="t" style="left:39px;top:552px;font-size:12px;color:#000;letter-spacing:-0.4px">Templates</span>
<svg style="left:760px;top:578px" width="10" height="10" viewBox="0 0 10 10"><path d="M8 1 V3 M5 4 V6 M8 4 V6 M2 7 V9 M5 7 V9 M8 7 V9" stroke="#b0b0b0" stroke-width="2" transform="rotate(0)"/></svg>
</div>
<div id="dlg2" class="dlg" style="left:874px;top:583px;width:389px;height:286px;border:1px solid #38689f;box-shadow:0 2px 12px rgba(0,0,0,0.22)">
<div style="left:0;top:0;width:387px;height:30px;background:#fff"></div>
<svg style="left:10px;top:7px" width="13" height="13" viewBox="0 0 13 13"><path d="M1 12 L4.500 1 H8 L11.500 11 H8.500 L7.800 8.500 L4.500 10 L4 12 Z M5.300 7 L7.200 6.200 L6.300 3.200 Z" fill="#b8222a" fill-rule="evenodd"/></svg>
<span class="t" style="left:29px;top:9px;font-size:12px;color:#000;">Assign Tag</span>
<svg style="left:366px;top:9px" width="11" height="11" viewBox="0 0 11 11"><path d="M0.500 0.500 L10.500 10.500 M10.500 0.500 L0.500 10.500" stroke="#222" stroke-width="1.100"/></svg>
<span class="t" style="left:-22px;top:52px;font-size:12px;color:#000;width:150px;text-align:right;letter-spacing:-0.4px">Class:</span>
<span class="t" style="left:133px;top:52px;font-size:12px;color:#000;letter-spacing:-0.45px">Pump</span>
<span class="t" style="left:-21px;top:75px;font-size:12px;color:#000;width:150px;text-align:right;letter-spacing:-0.4px">Tag Format:</span>
<span class="t" style="left:133px;top:75px;font-size:12px;color:#000;letter-spacing:-0.45px">Equipment Tag (Type-Number)</span>
<span class="t" style="left:59px;top:106px;font-size:12px;color:#000;width:150px;text-align:right;letter-spacing:-0.4px">Tag:</span>
<span class="t" style="left:59px;top:130px;font-size:12px;color:#000;width:150px;text-align:right;letter-spacing:-0.4px">Type:</span>
<span class="t" style="left:59px;top:154px;font-size:12px;color:#000;width:150px;text-align:right;letter-spacing:-0.4px">Number:</span>
<div style="left:216px;top:102px;width:139px;height:20px;background:#f0f0f0;border:1px solid #7a7a7a"></div>
<div style="left:216px;top:126px;width:139px;height:20px;background:#fff;border:1px solid #7a7a7a"></div>
<div style="left:216px;top:150px;width:139px;height:20px;background:#fff;border:1px solid #0078d7"></div>
<span class="t" style="left:220px;top:106px;font-size:12px;color:#000;letter-spacing:-0.9px">P-101-B</span>
<span class="t" style="left:220px;top:130px;font-size:12px;color:#000;letter-spacing:-0.45px">P</span>
<span class="t" style="left:220px;top:154px;font-size:12px;color:#d02828;letter-spacing:-0.9px">101-B</span>
<div style="left:248px;top:153px;width:1px;height:14px;background:#000"></div>
<div style="left:338px;top:152px;width:15px;height:16px;background:#e8e8e8;border:1px solid #adadad"></div>
<svg style="left:340px;top:154px" width="11" height="12" viewBox="0 0 11 12"><path d="M2 1 V5 L6 1 V5" fill="none" stroke="#2860c0" stroke-width="1"/><path d="M9 4 V9 H3 M5 7 L3 9 L5 11" fill="none" stroke="#111" stroke-width="1.200"/></svg>
<div style="left:32px;top:200px;width:322px;height:18px;background:#a0a0a0"></div>
<span class="t" style="left:41px;top:203px;font-size:11.5px;color:#000;font-weight:bold;letter-spacing:0">Existing Pump</span>
<div style="left:342px;top:206px;width:0;height:0;border-left:5px solid transparent;border-right:5px solid transparent;border-top:6px solid #000"></div>
<div class="btn" style="left:149px;top:250px;width:63px;height:21px;border:1px solid #adadad"></div><span class="t" style="left:149px;top:254px;font-size:12px;color:#000;width:63px;text-align:center;letter-spacing:-0.4px">Assign</span>
<div class="btn" style="left:220px;top:250px;width:63px;height:21px;border:1px solid #adadad"></div><span class="t" style="left:220px;top:254px;font-size:12px;color:#000;width:63px;text-align:center;letter-spacing:-0.4px">Cancel</span>
<div class="btn" style="left:291px;top:250px;width:63px;height:21px;border:1px solid #adadad"></div><span class="t" style="left:291px;top:254px;font-size:12px;color:#000;width:63px;text-align:center;letter-spacing:-0.4px">Help</span>
</div><!--/DLG-->
</body>
</html>
